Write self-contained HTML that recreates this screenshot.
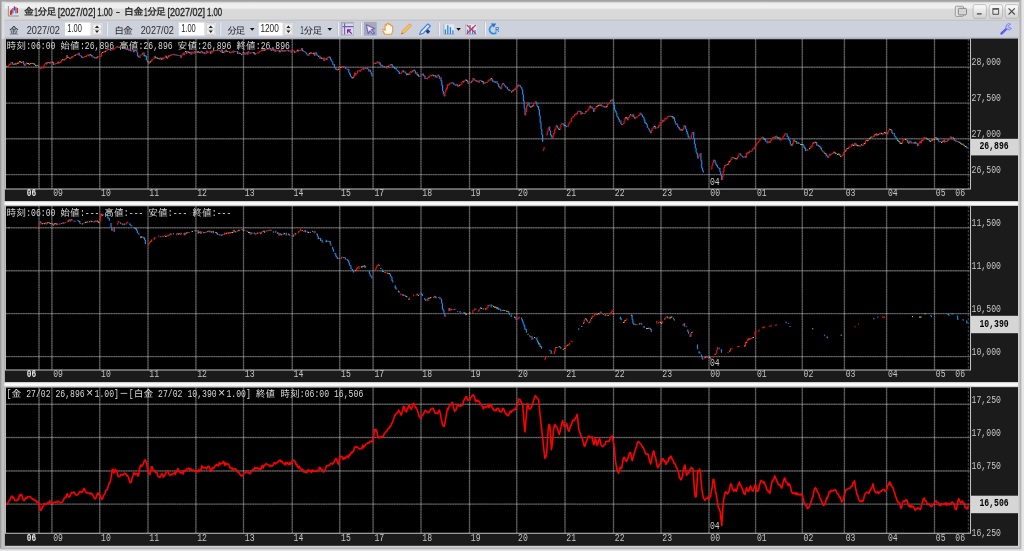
<!DOCTYPE html>
<html lang="ja"><head><meta charset="utf-8"><title>金1分足[2027/02]1.00 - 白金1分足[2027/02]1.00</title>
<style>
html,body{margin:0;padding:0;background:#a6a6a6;}
body{width:1024px;height:551px;overflow:hidden;position:relative;font-family:"Liberation Sans","IPAGothic",sans-serif;}
svg text{white-space:pre}
svg{will-change:transform}
</style></head><body>
<svg width="1024" height="551" viewBox="0 0 1024 551" style="position:absolute;left:0;top:0;display:block">
<defs>
<linearGradient id="gt" x1="0" y1="0" x2="0" y2="1"><stop offset="0" stop-color="#e6e6e6"/><stop offset="0.1" stop-color="#eeeeee"/><stop offset="0.3" stop-color="#f0f0f0"/><stop offset="0.4" stop-color="#dadada"/><stop offset="1" stop-color="#d8d8d8"/></linearGradient>
<linearGradient id="gs" x1="0" y1="0" x2="0" y2="1"><stop offset="0" stop-color="#d0d0d0"/><stop offset="0.35" stop-color="#ffffff"/><stop offset="0.7" stop-color="#f4f4f4"/><stop offset="1" stop-color="#b8b8b8"/></linearGradient>
<linearGradient id="gb" x1="0" y1="0" x2="0" y2="1"><stop offset="0" stop-color="#fdfdfd"/><stop offset="1" stop-color="#d0d0d0"/></linearGradient>
</defs>
<rect x="0" y="0" width="1024" height="551" fill="#e6e6ea"/>
<rect x="0" y="0" width="1021.4" height="549.3" fill="#b4b4b4"/>
<rect x="0" y="0" width="1019.6" height="547.7" fill="#a2a2a2"/>
<rect x="0" y="1.7" width="1.7" height="546" fill="#9a9a9a"/>
<rect x="1.7" y="1.7" width="1017.9" height="546.0" fill="#d0d0d0"/>
<rect x="1.7" y="39" width="4" height="508.70000000000005" fill="#c0c0c0"/>
<rect x="1.7" y="1.7" width="4" height="37.3" fill="#dcdcdc"/>
<rect x="4.5" y="2.6" width="1014.0" height="17.4" fill="url(#gt)"/>
<rect x="4.5" y="19.8" width="1014.0" height="0.9" fill="#b4b4b4"/>
<rect x="4.5" y="20.6" width="1014.0" height="18.2" fill="#cdd1dc"/>
<rect x="4.5" y="36.9" width="1014.0" height="1.9" fill="#bcc0ce"/>
<rect x="4.9" y="38.6" width="1013.1" height="162.6" fill="#1b1b1b"/>
<rect x="5.4" y="39.0" width="965.4" height="150.0" fill="#000"/>
<rect x="4.9" y="205.6" width="1013.1" height="176.6" fill="#1b1b1b"/>
<rect x="5.4" y="206.0" width="965.4" height="164.0" fill="#000"/>
<rect x="4.9" y="386.8" width="1013.1" height="158.99999999999997" fill="#1b1b1b"/>
<rect x="5.4" y="387.2" width="965.4" height="146.09999999999997" fill="#000"/>
<rect x="4.4" y="201.2" width="1013.6" height="4.800000000000011" fill="url(#gs)"/>
<rect x="4.4" y="382.2" width="1013.6" height="5.0" fill="url(#gs)"/>
<path d="M39 39.0V189.0M51.9 39.0V189.0M99.75 39.0V189.0M148 39.0V189.0M195.9 39.0V189.0M243.5 39.0V189.0M292.25 39.0V189.0M339.75 39.0V189.0M373.1 39.0V189.0M421 39.0V189.0M469.5 39.0V189.0M516.75 39.0V189.0M565 39.0V189.0M613.5 39.0V189.0M661 39.0V189.0M709 39.0V189.0M755.6 39.0V189.0M802.3 39.0V189.0M844.4 39.0V189.0M886.6 39.0V189.0M934.5 39.0V189.0M6.0 67.2H970.8M6.0 103.1H970.8M6.0 138.8H970.8M6.0 174.6H970.8" stroke="#3c3c3c" stroke-width="1.45" fill="none"/>
<path d="M39 39.0V189.0M51.9 39.0V189.0M99.75 39.0V189.0M148 39.0V189.0M195.9 39.0V189.0M243.5 39.0V189.0M292.25 39.0V189.0M339.75 39.0V189.0M373.1 39.0V189.0M421 39.0V189.0M469.5 39.0V189.0M516.75 39.0V189.0M565 39.0V189.0M613.5 39.0V189.0M661 39.0V189.0M709 39.0V189.0M755.6 39.0V189.0M802.3 39.0V189.0M844.4 39.0V189.0M886.6 39.0V189.0M934.5 39.0V189.0M6.0 67.2H970.8M6.0 103.1H970.8M6.0 138.8H970.8M6.0 174.6H970.8" stroke="#a0a0a0" stroke-width="1.0" stroke-dasharray="1.6 0.84" fill="none" opacity="0.45"/>
<path d="M38.3 67.2h1.4M38.3 103.1h1.4M38.3 138.8h1.4M38.3 174.6h1.4M51.199999999999996 67.2h1.4M51.199999999999996 103.1h1.4M51.199999999999996 138.8h1.4M51.199999999999996 174.6h1.4M99.05 67.2h1.4M99.05 103.1h1.4M99.05 138.8h1.4M99.05 174.6h1.4M147.3 67.2h1.4M147.3 103.1h1.4M147.3 138.8h1.4M147.3 174.6h1.4M195.20000000000002 67.2h1.4M195.20000000000002 103.1h1.4M195.20000000000002 138.8h1.4M195.20000000000002 174.6h1.4M242.8 67.2h1.4M242.8 103.1h1.4M242.8 138.8h1.4M242.8 174.6h1.4M291.55 67.2h1.4M291.55 103.1h1.4M291.55 138.8h1.4M291.55 174.6h1.4M339.05 67.2h1.4M339.05 103.1h1.4M339.05 138.8h1.4M339.05 174.6h1.4M372.40000000000003 67.2h1.4M372.40000000000003 103.1h1.4M372.40000000000003 138.8h1.4M372.40000000000003 174.6h1.4M420.3 67.2h1.4M420.3 103.1h1.4M420.3 138.8h1.4M420.3 174.6h1.4M468.8 67.2h1.4M468.8 103.1h1.4M468.8 138.8h1.4M468.8 174.6h1.4M516.05 67.2h1.4M516.05 103.1h1.4M516.05 138.8h1.4M516.05 174.6h1.4M564.3 67.2h1.4M564.3 103.1h1.4M564.3 138.8h1.4M564.3 174.6h1.4M612.8 67.2h1.4M612.8 103.1h1.4M612.8 138.8h1.4M612.8 174.6h1.4M660.3 67.2h1.4M660.3 103.1h1.4M660.3 138.8h1.4M660.3 174.6h1.4M708.3 67.2h1.4M708.3 103.1h1.4M708.3 138.8h1.4M708.3 174.6h1.4M754.9 67.2h1.4M754.9 103.1h1.4M754.9 138.8h1.4M754.9 174.6h1.4M801.5999999999999 67.2h1.4M801.5999999999999 103.1h1.4M801.5999999999999 138.8h1.4M801.5999999999999 174.6h1.4M843.6999999999999 67.2h1.4M843.6999999999999 103.1h1.4M843.6999999999999 138.8h1.4M843.6999999999999 174.6h1.4M885.9 67.2h1.4M885.9 103.1h1.4M885.9 138.8h1.4M885.9 174.6h1.4M933.8 67.2h1.4M933.8 103.1h1.4M933.8 138.8h1.4M933.8 174.6h1.4" stroke="#c4c4c4" stroke-width="1.3" fill="none" opacity="0.45"/>
<path d="M968.3 39.0V189.0" stroke="#6c6c6c" stroke-width="0.7" stroke-dasharray="2.4 1.6"/>
<path d="M5.45 38.7H970.5V188.9H5.45Z" stroke="#c2c2c2" stroke-width="1.05" fill="none"/>
<text x="26.80" y="196.40" font-size="10.4" font-family="Liberation Mono, IPAGothic, monospace" fill="#e6e6e6" textLength="9.40" lengthAdjust="spacingAndGlyphs" font-weight="bold">06</text>
<text x="53.20" y="196.40" font-size="10.4" font-family="Liberation Mono, IPAGothic, monospace" fill="#c4c4c4" textLength="9.77" lengthAdjust="spacingAndGlyphs">09</text>
<text x="101.05" y="196.40" font-size="10.4" font-family="Liberation Mono, IPAGothic, monospace" fill="#c4c4c4" textLength="9.77" lengthAdjust="spacingAndGlyphs">10</text>
<text x="149.30" y="196.40" font-size="10.4" font-family="Liberation Mono, IPAGothic, monospace" fill="#c4c4c4" textLength="9.77" lengthAdjust="spacingAndGlyphs">11</text>
<text x="197.20" y="196.40" font-size="10.4" font-family="Liberation Mono, IPAGothic, monospace" fill="#c4c4c4" textLength="9.77" lengthAdjust="spacingAndGlyphs">12</text>
<text x="244.80" y="196.40" font-size="10.4" font-family="Liberation Mono, IPAGothic, monospace" fill="#c4c4c4" textLength="9.77" lengthAdjust="spacingAndGlyphs">13</text>
<text x="293.55" y="196.40" font-size="10.4" font-family="Liberation Mono, IPAGothic, monospace" fill="#c4c4c4" textLength="9.77" lengthAdjust="spacingAndGlyphs">14</text>
<text x="341.05" y="196.40" font-size="10.4" font-family="Liberation Mono, IPAGothic, monospace" fill="#c4c4c4" textLength="9.77" lengthAdjust="spacingAndGlyphs">15</text>
<text x="374.40" y="196.40" font-size="10.4" font-family="Liberation Mono, IPAGothic, monospace" fill="#c4c4c4" textLength="9.77" lengthAdjust="spacingAndGlyphs">17</text>
<text x="422.30" y="196.40" font-size="10.4" font-family="Liberation Mono, IPAGothic, monospace" fill="#c4c4c4" textLength="9.77" lengthAdjust="spacingAndGlyphs">18</text>
<text x="470.80" y="196.40" font-size="10.4" font-family="Liberation Mono, IPAGothic, monospace" fill="#c4c4c4" textLength="9.77" lengthAdjust="spacingAndGlyphs">19</text>
<text x="518.05" y="196.40" font-size="10.4" font-family="Liberation Mono, IPAGothic, monospace" fill="#c4c4c4" textLength="9.77" lengthAdjust="spacingAndGlyphs">20</text>
<text x="566.30" y="196.40" font-size="10.4" font-family="Liberation Mono, IPAGothic, monospace" fill="#c4c4c4" textLength="9.77" lengthAdjust="spacingAndGlyphs">21</text>
<text x="614.80" y="196.40" font-size="10.4" font-family="Liberation Mono, IPAGothic, monospace" fill="#c4c4c4" textLength="9.77" lengthAdjust="spacingAndGlyphs">22</text>
<text x="662.30" y="196.40" font-size="10.4" font-family="Liberation Mono, IPAGothic, monospace" fill="#c4c4c4" textLength="9.77" lengthAdjust="spacingAndGlyphs">23</text>
<text x="710.30" y="196.40" font-size="10.4" font-family="Liberation Mono, IPAGothic, monospace" fill="#c4c4c4" textLength="9.77" lengthAdjust="spacingAndGlyphs">00</text>
<text x="756.90" y="196.40" font-size="10.4" font-family="Liberation Mono, IPAGothic, monospace" fill="#c4c4c4" textLength="9.77" lengthAdjust="spacingAndGlyphs">01</text>
<text x="803.60" y="196.40" font-size="10.4" font-family="Liberation Mono, IPAGothic, monospace" fill="#c4c4c4" textLength="9.77" lengthAdjust="spacingAndGlyphs">02</text>
<text x="845.70" y="196.40" font-size="10.4" font-family="Liberation Mono, IPAGothic, monospace" fill="#c4c4c4" textLength="9.77" lengthAdjust="spacingAndGlyphs">03</text>
<text x="887.90" y="196.40" font-size="10.4" font-family="Liberation Mono, IPAGothic, monospace" fill="#c4c4c4" textLength="9.77" lengthAdjust="spacingAndGlyphs">04</text>
<text x="935.80" y="196.40" font-size="10.4" font-family="Liberation Mono, IPAGothic, monospace" fill="#c4c4c4" textLength="9.77" lengthAdjust="spacingAndGlyphs">05</text>
<text x="955.30" y="196.40" font-size="10.4" font-family="Liberation Mono, IPAGothic, monospace" fill="#c4c4c4" textLength="9.77" lengthAdjust="spacingAndGlyphs">06</text>
<text x="709.90" y="184.90" font-size="10.4" font-family="Liberation Mono, IPAGothic, monospace" fill="#c8c8c8" textLength="9.77" lengthAdjust="spacingAndGlyphs">04</text>
<text x="971.60" y="65.40" font-size="10.4" font-family="Liberation Mono, IPAGothic, monospace" fill="#c6c6c6" textLength="29.32" lengthAdjust="spacingAndGlyphs">28,000</text>
<text x="971.60" y="101.30" font-size="10.4" font-family="Liberation Mono, IPAGothic, monospace" fill="#c6c6c6" textLength="29.32" lengthAdjust="spacingAndGlyphs">27,500</text>
<text x="971.60" y="137.00" font-size="10.4" font-family="Liberation Mono, IPAGothic, monospace" fill="#c6c6c6" textLength="29.32" lengthAdjust="spacingAndGlyphs">27,000</text>
<text x="971.60" y="172.80" font-size="10.4" font-family="Liberation Mono, IPAGothic, monospace" fill="#c6c6c6" textLength="29.32" lengthAdjust="spacingAndGlyphs">26,500</text>
<rect x="971.0" y="138.8" width="47.00000000000004" height="16.599999999999994" fill="#d6d6d6"/>
<text x="979.40" y="149.10" font-size="10.6" font-family="Liberation Mono, IPAGothic, monospace" fill="#000" textLength="29.32" lengthAdjust="spacingAndGlyphs" font-weight="bold">26,896</text>
<path d="M39 206.0V370.0M51.9 206.0V370.0M99.75 206.0V370.0M148 206.0V370.0M195.9 206.0V370.0M243.5 206.0V370.0M292.25 206.0V370.0M339.75 206.0V370.0M373.1 206.0V370.0M421 206.0V370.0M469.5 206.0V370.0M516.75 206.0V370.0M565 206.0V370.0M613.5 206.0V370.0M661 206.0V370.0M709 206.0V370.0M755.6 206.0V370.0M802.3 206.0V370.0M844.4 206.0V370.0M886.6 206.0V370.0M934.5 206.0V370.0M6.0 227.8H970.8M6.0 270.8H970.8M6.0 313.6H970.8M6.0 356.6H970.8" stroke="#3c3c3c" stroke-width="1.45" fill="none"/>
<path d="M39 206.0V370.0M51.9 206.0V370.0M99.75 206.0V370.0M148 206.0V370.0M195.9 206.0V370.0M243.5 206.0V370.0M292.25 206.0V370.0M339.75 206.0V370.0M373.1 206.0V370.0M421 206.0V370.0M469.5 206.0V370.0M516.75 206.0V370.0M565 206.0V370.0M613.5 206.0V370.0M661 206.0V370.0M709 206.0V370.0M755.6 206.0V370.0M802.3 206.0V370.0M844.4 206.0V370.0M886.6 206.0V370.0M934.5 206.0V370.0M6.0 227.8H970.8M6.0 270.8H970.8M6.0 313.6H970.8M6.0 356.6H970.8" stroke="#a0a0a0" stroke-width="1.0" stroke-dasharray="1.6 0.84" fill="none" opacity="0.45"/>
<path d="M38.3 227.8h1.4M38.3 270.8h1.4M38.3 313.6h1.4M38.3 356.6h1.4M51.199999999999996 227.8h1.4M51.199999999999996 270.8h1.4M51.199999999999996 313.6h1.4M51.199999999999996 356.6h1.4M99.05 227.8h1.4M99.05 270.8h1.4M99.05 313.6h1.4M99.05 356.6h1.4M147.3 227.8h1.4M147.3 270.8h1.4M147.3 313.6h1.4M147.3 356.6h1.4M195.20000000000002 227.8h1.4M195.20000000000002 270.8h1.4M195.20000000000002 313.6h1.4M195.20000000000002 356.6h1.4M242.8 227.8h1.4M242.8 270.8h1.4M242.8 313.6h1.4M242.8 356.6h1.4M291.55 227.8h1.4M291.55 270.8h1.4M291.55 313.6h1.4M291.55 356.6h1.4M339.05 227.8h1.4M339.05 270.8h1.4M339.05 313.6h1.4M339.05 356.6h1.4M372.40000000000003 227.8h1.4M372.40000000000003 270.8h1.4M372.40000000000003 313.6h1.4M372.40000000000003 356.6h1.4M420.3 227.8h1.4M420.3 270.8h1.4M420.3 313.6h1.4M420.3 356.6h1.4M468.8 227.8h1.4M468.8 270.8h1.4M468.8 313.6h1.4M468.8 356.6h1.4M516.05 227.8h1.4M516.05 270.8h1.4M516.05 313.6h1.4M516.05 356.6h1.4M564.3 227.8h1.4M564.3 270.8h1.4M564.3 313.6h1.4M564.3 356.6h1.4M612.8 227.8h1.4M612.8 270.8h1.4M612.8 313.6h1.4M612.8 356.6h1.4M660.3 227.8h1.4M660.3 270.8h1.4M660.3 313.6h1.4M660.3 356.6h1.4M708.3 227.8h1.4M708.3 270.8h1.4M708.3 313.6h1.4M708.3 356.6h1.4M754.9 227.8h1.4M754.9 270.8h1.4M754.9 313.6h1.4M754.9 356.6h1.4M801.5999999999999 227.8h1.4M801.5999999999999 270.8h1.4M801.5999999999999 313.6h1.4M801.5999999999999 356.6h1.4M843.6999999999999 227.8h1.4M843.6999999999999 270.8h1.4M843.6999999999999 313.6h1.4M843.6999999999999 356.6h1.4M885.9 227.8h1.4M885.9 270.8h1.4M885.9 313.6h1.4M885.9 356.6h1.4M933.8 227.8h1.4M933.8 270.8h1.4M933.8 313.6h1.4M933.8 356.6h1.4" stroke="#c4c4c4" stroke-width="1.3" fill="none" opacity="0.45"/>
<path d="M968.3 206.0V370.0" stroke="#6c6c6c" stroke-width="0.7" stroke-dasharray="2.4 1.6"/>
<path d="M5.45 205.7H970.5V369.9H5.45Z" stroke="#c2c2c2" stroke-width="1.05" fill="none"/>
<text x="26.80" y="377.40" font-size="10.4" font-family="Liberation Mono, IPAGothic, monospace" fill="#e6e6e6" textLength="9.40" lengthAdjust="spacingAndGlyphs" font-weight="bold">06</text>
<text x="53.20" y="377.40" font-size="10.4" font-family="Liberation Mono, IPAGothic, monospace" fill="#c4c4c4" textLength="9.77" lengthAdjust="spacingAndGlyphs">09</text>
<text x="101.05" y="377.40" font-size="10.4" font-family="Liberation Mono, IPAGothic, monospace" fill="#c4c4c4" textLength="9.77" lengthAdjust="spacingAndGlyphs">10</text>
<text x="149.30" y="377.40" font-size="10.4" font-family="Liberation Mono, IPAGothic, monospace" fill="#c4c4c4" textLength="9.77" lengthAdjust="spacingAndGlyphs">11</text>
<text x="197.20" y="377.40" font-size="10.4" font-family="Liberation Mono, IPAGothic, monospace" fill="#c4c4c4" textLength="9.77" lengthAdjust="spacingAndGlyphs">12</text>
<text x="244.80" y="377.40" font-size="10.4" font-family="Liberation Mono, IPAGothic, monospace" fill="#c4c4c4" textLength="9.77" lengthAdjust="spacingAndGlyphs">13</text>
<text x="293.55" y="377.40" font-size="10.4" font-family="Liberation Mono, IPAGothic, monospace" fill="#c4c4c4" textLength="9.77" lengthAdjust="spacingAndGlyphs">14</text>
<text x="341.05" y="377.40" font-size="10.4" font-family="Liberation Mono, IPAGothic, monospace" fill="#c4c4c4" textLength="9.77" lengthAdjust="spacingAndGlyphs">15</text>
<text x="374.40" y="377.40" font-size="10.4" font-family="Liberation Mono, IPAGothic, monospace" fill="#c4c4c4" textLength="9.77" lengthAdjust="spacingAndGlyphs">17</text>
<text x="422.30" y="377.40" font-size="10.4" font-family="Liberation Mono, IPAGothic, monospace" fill="#c4c4c4" textLength="9.77" lengthAdjust="spacingAndGlyphs">18</text>
<text x="470.80" y="377.40" font-size="10.4" font-family="Liberation Mono, IPAGothic, monospace" fill="#c4c4c4" textLength="9.77" lengthAdjust="spacingAndGlyphs">19</text>
<text x="518.05" y="377.40" font-size="10.4" font-family="Liberation Mono, IPAGothic, monospace" fill="#c4c4c4" textLength="9.77" lengthAdjust="spacingAndGlyphs">20</text>
<text x="566.30" y="377.40" font-size="10.4" font-family="Liberation Mono, IPAGothic, monospace" fill="#c4c4c4" textLength="9.77" lengthAdjust="spacingAndGlyphs">21</text>
<text x="614.80" y="377.40" font-size="10.4" font-family="Liberation Mono, IPAGothic, monospace" fill="#c4c4c4" textLength="9.77" lengthAdjust="spacingAndGlyphs">22</text>
<text x="662.30" y="377.40" font-size="10.4" font-family="Liberation Mono, IPAGothic, monospace" fill="#c4c4c4" textLength="9.77" lengthAdjust="spacingAndGlyphs">23</text>
<text x="710.30" y="377.40" font-size="10.4" font-family="Liberation Mono, IPAGothic, monospace" fill="#c4c4c4" textLength="9.77" lengthAdjust="spacingAndGlyphs">00</text>
<text x="756.90" y="377.40" font-size="10.4" font-family="Liberation Mono, IPAGothic, monospace" fill="#c4c4c4" textLength="9.77" lengthAdjust="spacingAndGlyphs">01</text>
<text x="803.60" y="377.40" font-size="10.4" font-family="Liberation Mono, IPAGothic, monospace" fill="#c4c4c4" textLength="9.77" lengthAdjust="spacingAndGlyphs">02</text>
<text x="845.70" y="377.40" font-size="10.4" font-family="Liberation Mono, IPAGothic, monospace" fill="#c4c4c4" textLength="9.77" lengthAdjust="spacingAndGlyphs">03</text>
<text x="887.90" y="377.40" font-size="10.4" font-family="Liberation Mono, IPAGothic, monospace" fill="#c4c4c4" textLength="9.77" lengthAdjust="spacingAndGlyphs">04</text>
<text x="935.80" y="377.40" font-size="10.4" font-family="Liberation Mono, IPAGothic, monospace" fill="#c4c4c4" textLength="9.77" lengthAdjust="spacingAndGlyphs">05</text>
<text x="955.30" y="377.40" font-size="10.4" font-family="Liberation Mono, IPAGothic, monospace" fill="#c4c4c4" textLength="9.77" lengthAdjust="spacingAndGlyphs">06</text>
<text x="709.90" y="366.30" font-size="10.4" font-family="Liberation Mono, IPAGothic, monospace" fill="#c8c8c8" textLength="9.77" lengthAdjust="spacingAndGlyphs">04</text>
<text x="971.60" y="226.00" font-size="10.4" font-family="Liberation Mono, IPAGothic, monospace" fill="#c6c6c6" textLength="29.32" lengthAdjust="spacingAndGlyphs">11,500</text>
<text x="971.60" y="269.00" font-size="10.4" font-family="Liberation Mono, IPAGothic, monospace" fill="#c6c6c6" textLength="29.32" lengthAdjust="spacingAndGlyphs">11,000</text>
<text x="971.60" y="311.80" font-size="10.4" font-family="Liberation Mono, IPAGothic, monospace" fill="#c6c6c6" textLength="29.32" lengthAdjust="spacingAndGlyphs">10,500</text>
<text x="971.60" y="354.80" font-size="10.4" font-family="Liberation Mono, IPAGothic, monospace" fill="#c6c6c6" textLength="29.32" lengthAdjust="spacingAndGlyphs">10,000</text>
<rect x="971.0" y="315.8" width="47.00000000000004" height="17.399999999999977" fill="#d6d6d6"/>
<text x="979.40" y="326.50" font-size="10.6" font-family="Liberation Mono, IPAGothic, monospace" fill="#000" textLength="29.32" lengthAdjust="spacingAndGlyphs" font-weight="bold">10,390</text>
<path d="M39 387.2V533.3M51.9 387.2V533.3M99.75 387.2V533.3M148 387.2V533.3M195.9 387.2V533.3M243.5 387.2V533.3M292.25 387.2V533.3M339.75 387.2V533.3M373.1 387.2V533.3M421 387.2V533.3M469.5 387.2V533.3M516.75 387.2V533.3M565 387.2V533.3M613.5 387.2V533.3M661 387.2V533.3M709 387.2V533.3M755.6 387.2V533.3M802.3 387.2V533.3M844.4 387.2V533.3M886.6 387.2V533.3M934.5 387.2V533.3M6.0 404.3H970.8M6.0 437.5H970.8M6.0 470.9H970.8M6.0 504.1H970.8" stroke="#3c3c3c" stroke-width="1.45" fill="none"/>
<path d="M39 387.2V533.3M51.9 387.2V533.3M99.75 387.2V533.3M148 387.2V533.3M195.9 387.2V533.3M243.5 387.2V533.3M292.25 387.2V533.3M339.75 387.2V533.3M373.1 387.2V533.3M421 387.2V533.3M469.5 387.2V533.3M516.75 387.2V533.3M565 387.2V533.3M613.5 387.2V533.3M661 387.2V533.3M709 387.2V533.3M755.6 387.2V533.3M802.3 387.2V533.3M844.4 387.2V533.3M886.6 387.2V533.3M934.5 387.2V533.3M6.0 404.3H970.8M6.0 437.5H970.8M6.0 470.9H970.8M6.0 504.1H970.8" stroke="#a0a0a0" stroke-width="1.0" stroke-dasharray="1.6 0.84" fill="none" opacity="0.45"/>
<path d="M38.3 404.3h1.4M38.3 437.5h1.4M38.3 470.9h1.4M38.3 504.1h1.4M51.199999999999996 404.3h1.4M51.199999999999996 437.5h1.4M51.199999999999996 470.9h1.4M51.199999999999996 504.1h1.4M99.05 404.3h1.4M99.05 437.5h1.4M99.05 470.9h1.4M99.05 504.1h1.4M147.3 404.3h1.4M147.3 437.5h1.4M147.3 470.9h1.4M147.3 504.1h1.4M195.20000000000002 404.3h1.4M195.20000000000002 437.5h1.4M195.20000000000002 470.9h1.4M195.20000000000002 504.1h1.4M242.8 404.3h1.4M242.8 437.5h1.4M242.8 470.9h1.4M242.8 504.1h1.4M291.55 404.3h1.4M291.55 437.5h1.4M291.55 470.9h1.4M291.55 504.1h1.4M339.05 404.3h1.4M339.05 437.5h1.4M339.05 470.9h1.4M339.05 504.1h1.4M372.40000000000003 404.3h1.4M372.40000000000003 437.5h1.4M372.40000000000003 470.9h1.4M372.40000000000003 504.1h1.4M420.3 404.3h1.4M420.3 437.5h1.4M420.3 470.9h1.4M420.3 504.1h1.4M468.8 404.3h1.4M468.8 437.5h1.4M468.8 470.9h1.4M468.8 504.1h1.4M516.05 404.3h1.4M516.05 437.5h1.4M516.05 470.9h1.4M516.05 504.1h1.4M564.3 404.3h1.4M564.3 437.5h1.4M564.3 470.9h1.4M564.3 504.1h1.4M612.8 404.3h1.4M612.8 437.5h1.4M612.8 470.9h1.4M612.8 504.1h1.4M660.3 404.3h1.4M660.3 437.5h1.4M660.3 470.9h1.4M660.3 504.1h1.4M708.3 404.3h1.4M708.3 437.5h1.4M708.3 470.9h1.4M708.3 504.1h1.4M754.9 404.3h1.4M754.9 437.5h1.4M754.9 470.9h1.4M754.9 504.1h1.4M801.5999999999999 404.3h1.4M801.5999999999999 437.5h1.4M801.5999999999999 470.9h1.4M801.5999999999999 504.1h1.4M843.6999999999999 404.3h1.4M843.6999999999999 437.5h1.4M843.6999999999999 470.9h1.4M843.6999999999999 504.1h1.4M885.9 404.3h1.4M885.9 437.5h1.4M885.9 470.9h1.4M885.9 504.1h1.4M933.8 404.3h1.4M933.8 437.5h1.4M933.8 470.9h1.4M933.8 504.1h1.4" stroke="#c4c4c4" stroke-width="1.3" fill="none" opacity="0.45"/>
<path d="M968.3 387.2V533.3" stroke="#6c6c6c" stroke-width="0.7" stroke-dasharray="2.4 1.6"/>
<path d="M5.45 386.9H970.5V533.1999999999999H5.45Z" stroke="#c2c2c2" stroke-width="1.05" fill="none"/>
<text x="26.80" y="540.70" font-size="10.4" font-family="Liberation Mono, IPAGothic, monospace" fill="#e6e6e6" textLength="9.40" lengthAdjust="spacingAndGlyphs" font-weight="bold">06</text>
<text x="53.20" y="540.70" font-size="10.4" font-family="Liberation Mono, IPAGothic, monospace" fill="#c4c4c4" textLength="9.77" lengthAdjust="spacingAndGlyphs">09</text>
<text x="101.05" y="540.70" font-size="10.4" font-family="Liberation Mono, IPAGothic, monospace" fill="#c4c4c4" textLength="9.77" lengthAdjust="spacingAndGlyphs">10</text>
<text x="149.30" y="540.70" font-size="10.4" font-family="Liberation Mono, IPAGothic, monospace" fill="#c4c4c4" textLength="9.77" lengthAdjust="spacingAndGlyphs">11</text>
<text x="197.20" y="540.70" font-size="10.4" font-family="Liberation Mono, IPAGothic, monospace" fill="#c4c4c4" textLength="9.77" lengthAdjust="spacingAndGlyphs">12</text>
<text x="244.80" y="540.70" font-size="10.4" font-family="Liberation Mono, IPAGothic, monospace" fill="#c4c4c4" textLength="9.77" lengthAdjust="spacingAndGlyphs">13</text>
<text x="293.55" y="540.70" font-size="10.4" font-family="Liberation Mono, IPAGothic, monospace" fill="#c4c4c4" textLength="9.77" lengthAdjust="spacingAndGlyphs">14</text>
<text x="341.05" y="540.70" font-size="10.4" font-family="Liberation Mono, IPAGothic, monospace" fill="#c4c4c4" textLength="9.77" lengthAdjust="spacingAndGlyphs">15</text>
<text x="374.40" y="540.70" font-size="10.4" font-family="Liberation Mono, IPAGothic, monospace" fill="#c4c4c4" textLength="9.77" lengthAdjust="spacingAndGlyphs">17</text>
<text x="422.30" y="540.70" font-size="10.4" font-family="Liberation Mono, IPAGothic, monospace" fill="#c4c4c4" textLength="9.77" lengthAdjust="spacingAndGlyphs">18</text>
<text x="470.80" y="540.70" font-size="10.4" font-family="Liberation Mono, IPAGothic, monospace" fill="#c4c4c4" textLength="9.77" lengthAdjust="spacingAndGlyphs">19</text>
<text x="518.05" y="540.70" font-size="10.4" font-family="Liberation Mono, IPAGothic, monospace" fill="#c4c4c4" textLength="9.77" lengthAdjust="spacingAndGlyphs">20</text>
<text x="566.30" y="540.70" font-size="10.4" font-family="Liberation Mono, IPAGothic, monospace" fill="#c4c4c4" textLength="9.77" lengthAdjust="spacingAndGlyphs">21</text>
<text x="614.80" y="540.70" font-size="10.4" font-family="Liberation Mono, IPAGothic, monospace" fill="#c4c4c4" textLength="9.77" lengthAdjust="spacingAndGlyphs">22</text>
<text x="662.30" y="540.70" font-size="10.4" font-family="Liberation Mono, IPAGothic, monospace" fill="#c4c4c4" textLength="9.77" lengthAdjust="spacingAndGlyphs">23</text>
<text x="710.30" y="540.70" font-size="10.4" font-family="Liberation Mono, IPAGothic, monospace" fill="#c4c4c4" textLength="9.77" lengthAdjust="spacingAndGlyphs">00</text>
<text x="756.90" y="540.70" font-size="10.4" font-family="Liberation Mono, IPAGothic, monospace" fill="#c4c4c4" textLength="9.77" lengthAdjust="spacingAndGlyphs">01</text>
<text x="803.60" y="540.70" font-size="10.4" font-family="Liberation Mono, IPAGothic, monospace" fill="#c4c4c4" textLength="9.77" lengthAdjust="spacingAndGlyphs">02</text>
<text x="845.70" y="540.70" font-size="10.4" font-family="Liberation Mono, IPAGothic, monospace" fill="#c4c4c4" textLength="9.77" lengthAdjust="spacingAndGlyphs">03</text>
<text x="887.90" y="540.70" font-size="10.4" font-family="Liberation Mono, IPAGothic, monospace" fill="#c4c4c4" textLength="9.77" lengthAdjust="spacingAndGlyphs">04</text>
<text x="935.80" y="540.70" font-size="10.4" font-family="Liberation Mono, IPAGothic, monospace" fill="#c4c4c4" textLength="9.77" lengthAdjust="spacingAndGlyphs">05</text>
<text x="955.30" y="540.70" font-size="10.4" font-family="Liberation Mono, IPAGothic, monospace" fill="#c4c4c4" textLength="9.77" lengthAdjust="spacingAndGlyphs">06</text>
<text x="709.90" y="529.40" font-size="10.4" font-family="Liberation Mono, IPAGothic, monospace" fill="#c8c8c8" textLength="9.77" lengthAdjust="spacingAndGlyphs">04</text>
<text x="971.60" y="402.50" font-size="10.4" font-family="Liberation Mono, IPAGothic, monospace" fill="#c6c6c6" textLength="29.32" lengthAdjust="spacingAndGlyphs">17,250</text>
<text x="971.60" y="435.70" font-size="10.4" font-family="Liberation Mono, IPAGothic, monospace" fill="#c6c6c6" textLength="29.32" lengthAdjust="spacingAndGlyphs">17,000</text>
<text x="971.60" y="469.10" font-size="10.4" font-family="Liberation Mono, IPAGothic, monospace" fill="#c6c6c6" textLength="29.32" lengthAdjust="spacingAndGlyphs">16,750</text>
<text x="971.60" y="535.60" font-size="10.4" font-family="Liberation Mono, IPAGothic, monospace" fill="#c6c6c6" textLength="29.32" lengthAdjust="spacingAndGlyphs">16,250</text>
<rect x="971.0" y="495.7" width="47.00000000000004" height="17.500000000000057" fill="#d6d6d6"/>
<text x="979.40" y="506.45" font-size="10.6" font-family="Liberation Mono, IPAGothic, monospace" fill="#000" textLength="29.32" lengthAdjust="spacingAndGlyphs" font-weight="bold">16,506</text>
<text x="6.60" y="48.90" font-size="9.77" font-family="Liberation Mono, IPAGothic, monospace" fill="#d8d8d8" textLength="19.54" lengthAdjust="spacing">時刻</text>
<text x="26.14" y="49.20" font-size="10.4" font-family="Liberation Mono, IPAGothic, monospace" fill="#d8d8d8" textLength="29.32" lengthAdjust="spacingAndGlyphs">:06:00</text>
<text x="60.35" y="48.90" font-size="9.77" font-family="Liberation Mono, IPAGothic, monospace" fill="#d8d8d8" textLength="19.54" lengthAdjust="spacing">始値</text>
<text x="79.89" y="49.20" font-size="10.4" font-family="Liberation Mono, IPAGothic, monospace" fill="#d8d8d8" textLength="34.20" lengthAdjust="spacingAndGlyphs">:26,896</text>
<text x="118.98" y="48.90" font-size="9.77" font-family="Liberation Mono, IPAGothic, monospace" fill="#d8d8d8" textLength="19.54" lengthAdjust="spacing">高値</text>
<text x="138.52" y="49.20" font-size="10.4" font-family="Liberation Mono, IPAGothic, monospace" fill="#d8d8d8" textLength="34.20" lengthAdjust="spacingAndGlyphs">:26,896</text>
<text x="177.61" y="48.90" font-size="9.77" font-family="Liberation Mono, IPAGothic, monospace" fill="#d8d8d8" textLength="19.54" lengthAdjust="spacing">安値</text>
<text x="197.15" y="49.20" font-size="10.4" font-family="Liberation Mono, IPAGothic, monospace" fill="#d8d8d8" textLength="34.20" lengthAdjust="spacingAndGlyphs">:26,896</text>
<text x="236.24" y="48.90" font-size="9.77" font-family="Liberation Mono, IPAGothic, monospace" fill="#d8d8d8" textLength="19.54" lengthAdjust="spacing">終値</text>
<text x="255.79" y="49.20" font-size="10.4" font-family="Liberation Mono, IPAGothic, monospace" fill="#d8d8d8" textLength="34.20" lengthAdjust="spacingAndGlyphs">:26,896</text>
<text x="6.60" y="215.70" font-size="9.77" font-family="Liberation Mono, IPAGothic, monospace" fill="#d8d8d8" textLength="19.54" lengthAdjust="spacing">時刻</text>
<text x="26.14" y="216.00" font-size="10.4" font-family="Liberation Mono, IPAGothic, monospace" fill="#d8d8d8" textLength="29.32" lengthAdjust="spacingAndGlyphs">:06:00</text>
<text x="60.35" y="215.70" font-size="9.77" font-family="Liberation Mono, IPAGothic, monospace" fill="#d8d8d8" textLength="19.54" lengthAdjust="spacing">始値</text>
<text x="79.89" y="216.00" font-size="10.4" font-family="Liberation Mono, IPAGothic, monospace" fill="#d8d8d8" textLength="19.54" lengthAdjust="spacingAndGlyphs">:---</text>
<text x="104.32" y="215.70" font-size="9.77" font-family="Liberation Mono, IPAGothic, monospace" fill="#d8d8d8" textLength="19.54" lengthAdjust="spacing">高値</text>
<text x="123.86" y="216.00" font-size="10.4" font-family="Liberation Mono, IPAGothic, monospace" fill="#d8d8d8" textLength="19.54" lengthAdjust="spacingAndGlyphs">:---</text>
<text x="148.29" y="215.70" font-size="9.77" font-family="Liberation Mono, IPAGothic, monospace" fill="#d8d8d8" textLength="19.54" lengthAdjust="spacing">安値</text>
<text x="167.84" y="216.00" font-size="10.4" font-family="Liberation Mono, IPAGothic, monospace" fill="#d8d8d8" textLength="19.54" lengthAdjust="spacingAndGlyphs">:---</text>
<text x="192.27" y="215.70" font-size="9.77" font-family="Liberation Mono, IPAGothic, monospace" fill="#d8d8d8" textLength="19.54" lengthAdjust="spacing">終値</text>
<text x="211.81" y="216.00" font-size="10.4" font-family="Liberation Mono, IPAGothic, monospace" fill="#d8d8d8" textLength="19.54" lengthAdjust="spacingAndGlyphs">:---</text>
<text x="6.60" y="397.20" font-size="10.4" font-family="Liberation Mono, IPAGothic, monospace" fill="#d8d8d8" textLength="4.89" lengthAdjust="spacingAndGlyphs">[</text>
<text x="11.49" y="396.90" font-size="9.77" font-family="Liberation Mono, IPAGothic, monospace" fill="#d8d8d8" textLength="9.77" lengthAdjust="spacing">金</text>
<text x="26.14" y="397.20" font-size="10.4" font-family="Liberation Mono, IPAGothic, monospace" fill="#d8d8d8" textLength="58.63" lengthAdjust="spacingAndGlyphs">27/02 26,896</text>
<text x="89.66" y="397.20" font-size="12.21" font-family="Liberation Mono, IPAGothic, monospace" fill="#d8d8d8" text-anchor="middle">×</text>
<text x="94.55" y="397.20" font-size="10.4" font-family="Liberation Mono, IPAGothic, monospace" fill="#d8d8d8" textLength="24.43" lengthAdjust="spacingAndGlyphs">1.00]</text>
<text x="118.98" y="396.90" font-size="9.77" font-family="Liberation Mono, IPAGothic, monospace" fill="#d8d8d8" textLength="9.77" lengthAdjust="spacing">－</text>
<text x="128.75" y="397.20" font-size="10.4" font-family="Liberation Mono, IPAGothic, monospace" fill="#d8d8d8" textLength="4.89" lengthAdjust="spacingAndGlyphs">[</text>
<text x="133.64" y="396.90" font-size="9.77" font-family="Liberation Mono, IPAGothic, monospace" fill="#d8d8d8" textLength="19.54" lengthAdjust="spacing">白金</text>
<text x="158.07" y="397.20" font-size="10.4" font-family="Liberation Mono, IPAGothic, monospace" fill="#d8d8d8" textLength="58.63" lengthAdjust="spacingAndGlyphs">27/02 10,390</text>
<text x="221.58" y="397.20" font-size="12.21" font-family="Liberation Mono, IPAGothic, monospace" fill="#d8d8d8" text-anchor="middle">×</text>
<text x="226.47" y="397.20" font-size="10.4" font-family="Liberation Mono, IPAGothic, monospace" fill="#d8d8d8" textLength="24.43" lengthAdjust="spacingAndGlyphs">1.00]</text>
<text x="255.79" y="396.90" font-size="9.77" font-family="Liberation Mono, IPAGothic, monospace" fill="#d8d8d8" textLength="19.54" lengthAdjust="spacing">終値</text>
<text x="280.22" y="396.90" font-size="9.77" font-family="Liberation Mono, IPAGothic, monospace" fill="#d8d8d8" textLength="19.54" lengthAdjust="spacing">時刻</text>
<text x="299.76" y="397.20" font-size="10.4" font-family="Liberation Mono, IPAGothic, monospace" fill="#d8d8d8" textLength="63.52" lengthAdjust="spacingAndGlyphs">:06:00 16,506</text>
<path d="M7.60 66.33V66.59M10.00 64.02V64.88M12.40 62.02V64.38M13.20 63.72V64.53M15.60 63.12V64.86M22.00 61.91V63.34M23.60 60.97V64.36M24.40 63.83V65.78M26.80 62.56V63.73M32.40 62.74V64.03M33.20 63.35V64.14M36.40 64.99V66.25M43.20 67.11V68.25M46.40 62.53V64.49M49.60 62.08V63.55M51.20 61.60V62.98M53.60 62.22V64.99M56.80 62.95V63.79M58.40 61.47V63.49M60.00 61.89V63.03M67.20 55.11V57.62M68.80 57.27V58.03M69.60 57.79V59.09M77.60 53.84V54.80M79.20 52.75V55.73M80.80 54.97V56.37M81.60 56.11V57.57M82.40 56.77V57.91M85.60 56.20V57.09M88.80 54.44V56.14M90.40 54.08V55.24M92.00 54.97V57.28M93.60 56.48V57.62M94.40 57.01V58.32M100.80 55.64V56.46M103.20 52.16V52.98M108.00 47.74V49.80M108.80 49.01V50.07M110.40 48.97V50.71M113.60 48.32V49.39M117.60 46.13V47.43M120.80 46.51V48.06M123.20 47.07V48.41M125.60 47.03V49.06M127.20 47.75V49.79M128.80 48.56V50.64M130.40 49.49V51.05M131.20 50.71V51.57M133.60 49.46V52.17M136.80 50.08V52.62M137.60 52.52V56.20M138.40 55.66V56.95M139.20 56.41V57.91M144.00 52.29V56.28M145.60 55.51V56.56M146.40 55.72V60.07M147.20 59.78V61.20M148.80 61.41V63.76M155.20 55.71V58.13M156.80 57.53V58.27M158.40 57.95V58.95M160.80 57.55V59.48M163.20 57.38V59.39M166.40 55.66V57.91M171.20 54.52V55.58M172.80 54.12V54.80M174.40 54.16V55.28M176.00 54.14V55.47M177.60 54.77V55.73M178.40 55.19V55.79M179.20 55.53V56.07M180.80 54.95V57.74M184.00 52.45V54.93M186.40 51.00V53.77M188.00 51.20V52.60M189.60 51.86V53.55M191.20 51.92V54.82M192.80 51.64V52.85M193.60 52.44V53.56M196.00 50.70V53.30M199.20 51.66V53.02M201.60 50.85V51.98M202.40 51.55V52.89M203.20 52.52V53.76M204.80 52.04V54.20M207.20 50.76V53.03M210.40 51.24V54.02M212.00 50.72V52.49M215.20 50.14V50.93M218.40 49.66V50.59M219.20 50.03V50.86M220.00 50.23V51.24M220.80 50.89V52.22M222.40 49.41V52.89M224.80 50.71V52.54M226.40 49.83V51.70M228.00 51.43V52.00M229.60 51.41V53.15M231.20 51.91V52.66M232.80 51.23V52.47M234.40 50.95V51.72M235.20 51.20V52.08M237.60 51.08V53.96M239.20 52.38V53.79M240.80 53.36V54.15M241.60 54.00V55.31M244.80 52.47V54.47M247.20 52.06V54.73M248.80 51.36V53.37M250.40 52.46V53.39M252.80 52.19V52.87M254.40 52.34V54.23M258.40 52.65V53.21M260.00 50.98V51.63M262.40 49.57V51.13M267.20 48.68V49.47M268.00 49.00V49.57M269.60 48.47V49.05M271.20 48.42V50.77M273.60 47.62V50.86M275.20 49.21V52.00M276.80 50.25V50.83M279.20 49.88V52.16M281.60 49.17V50.65M282.40 50.05V51.38M284.00 49.91V51.63M285.60 50.19V51.30M288.00 49.83V50.72M288.80 50.12V51.55M291.20 50.93V52.85M292.80 49.41V51.11M294.40 50.64V53.04M298.40 49.83V51.48M300.00 50.24V50.90M302.40 48.31V50.99M303.20 50.19V51.82M304.80 50.92V52.19M305.60 52.02V52.76M306.40 52.70V54.36M307.20 54.13V54.94M308.00 54.61V55.82M311.20 51.96V53.42M312.00 53.12V53.76M314.40 52.86V55.63M316.00 52.00V53.70M316.80 53.30V55.41M317.60 54.81V55.70M320.00 55.82V58.66M322.40 58.10V59.04M324.00 57.41V60.89M326.40 58.24V59.85M328.00 57.21V58.09M329.60 56.20V57.72M330.40 57.34V59.47M331.20 58.89V61.12M332.00 60.70V62.12M332.80 61.79V64.81M334.40 64.08V67.45M335.20 67.11V68.56M336.00 68.36V69.95M336.80 69.08V70.11M343.20 66.18V67.82M344.80 66.38V67.61M345.60 66.99V68.78M346.40 68.73V69.09M347.20 68.76V70.31M348.80 68.77V72.80M349.60 72.40V74.53M350.40 73.64V76.47M351.20 76.01V77.24M352.00 77.11V78.48M355.20 72.83V75.16M360.00 70.16V71.71M363.20 67.67V69.64M365.60 67.43V68.78M367.20 67.87V69.15M368.00 68.40V68.99M368.80 68.94V71.43M370.40 69.74V72.07M371.20 71.68V74.29M372.00 73.72V76.43M375.40 62.70V63.88M377.80 61.59V63.24M379.40 62.34V63.47M380.20 62.60V65.08M381.00 64.62V66.40M382.60 65.01V66.70M384.20 66.11V67.50M385.00 67.10V67.87M386.60 66.34V68.27M391.40 63.93V64.88M392.20 64.31V66.46M393.00 65.75V67.17M393.80 66.83V68.07M395.40 67.90V68.74M396.20 67.82V69.79M397.00 69.61V70.54M397.80 70.23V71.50M398.60 70.76V72.25M399.40 71.77V73.91M400.20 73.41V73.87M403.40 70.32V72.23M405.00 71.34V72.70M405.80 72.40V73.87M406.60 73.60V75.62M409.00 73.91V74.94M411.40 71.51V72.68M414.60 69.49V71.00M415.40 70.68V73.67M417.00 72.36V75.35M418.60 74.52V76.75M419.40 75.98V76.66M421.80 74.29V75.29M423.40 73.61V75.73M424.20 75.31V76.36M425.00 75.83V79.01M426.60 78.15V78.99M428.20 77.23V78.10M431.40 74.99V76.23M433.00 74.41V75.98M435.40 74.93V76.72M436.20 76.11V77.90M438.60 74.45V76.21M439.40 76.01V78.81M441.00 77.13V81.13M441.80 80.59V85.85M442.60 85.08V91.19M443.40 90.90V93.93M444.20 93.77V96.35M448.20 84.36V85.42M450.60 82.83V83.35M452.20 82.31V83.29M453.00 82.58V83.50M453.80 82.85V84.79M454.60 84.41V85.04M455.40 84.39V85.66M457.00 83.82V85.43M457.80 85.09V86.71M463.40 80.76V82.50M465.80 79.33V80.56M467.40 80.18V82.01M468.20 81.15V84.05M469.80 82.18V83.35M470.60 82.80V83.26M473.80 78.01V79.57M474.60 79.23V80.54M475.40 79.93V80.60M476.20 80.03V81.85M477.80 80.50V81.96M478.60 81.50V82.50M481.00 80.04V81.07M481.80 80.77V82.01M483.40 81.30V84.30M485.80 82.13V83.06M487.40 81.79V82.42M489.80 79.50V80.59M492.20 78.52V81.00M493.00 80.51V81.94M493.80 81.07V82.17M494.60 81.61V82.38M495.40 81.54V82.92M497.00 81.20V83.24M497.80 82.91V84.21M498.60 83.80V86.87M499.40 86.29V87.38M500.20 86.75V88.43M501.00 88.21V89.15M503.40 82.91V84.04M504.20 83.79V85.51M505.00 85.31V86.45M505.80 85.94V87.58M507.40 86.92V89.33M508.20 88.97V89.82M509.00 89.10V90.71M509.80 89.88V90.99M510.60 90.67V90.91M515.40 88.57V89.63M517.00 86.43V87.71M518.60 84.45V86.19M520.20 85.02V86.99M521.00 86.67V87.79M521.80 87.32V89.71M522.60 89.52V94.58M523.40 94.18V101.28M524.20 100.83V108.24M525.00 108.00V115.37M528.20 102.44V103.09M529.00 102.80V105.85M529.80 105.39V106.91M530.60 106.27V107.65M536.20 101.50V103.12M537.00 102.63V105.90M538.60 106.23V109.78M539.40 109.39V115.65M540.20 115.39V122.86M541.00 122.35V129.35M541.80 128.98V135.02M542.60 134.51V141.86M549.70 126.62V130.69M550.50 130.50V135.26M551.30 134.60V136.82M552.10 136.32V138.73M556.90 125.00V126.76M557.70 126.29V128.21M558.50 127.91V129.54M562.50 123.28V124.15M563.30 123.60V124.62M564.10 123.70V126.36M565.70 125.13V126.50M566.50 125.97V127.07M567.30 126.65V127.09M572.90 116.60V117.00M575.30 114.34V114.95M576.90 112.71V114.10M579.30 110.64V111.62M580.10 111.11V111.90M580.90 111.37V114.55M582.50 112.40V113.70M584.10 112.96V113.76M590.50 105.44V107.98M592.10 106.44V108.68M592.90 108.64V108.94M593.70 108.32V111.97M601.70 104.59V106.33M603.30 105.64V106.53M604.10 106.09V107.20M604.90 106.73V107.83M608.90 103.43V104.25M612.90 98.94V101.44M613.70 101.01V105.43M614.50 104.80V110.07M615.30 109.43V111.77M616.10 110.90V113.31M616.90 113.07V116.56M617.70 116.14V117.75M618.50 117.37V119.58M619.30 119.05V122.09M620.90 120.55V124.11M621.70 123.83V125.02M627.30 117.40V120.18M632.10 114.26V116.66M633.70 114.58V117.37M634.50 116.83V118.87M636.10 117.30V118.09M640.90 112.63V114.64M641.70 113.94V115.33M642.50 114.68V117.00M643.30 116.43V118.04M644.10 117.60V120.44M644.90 119.74V123.34M646.50 122.97V124.41M647.30 124.30V127.68M648.10 127.60V128.35M648.90 128.10V129.99M649.70 129.67V131.39M650.50 131.20V133.26M655.30 125.92V128.71M656.90 127.43V128.26M659.30 125.20V126.13M660.90 122.04V122.60M663.30 119.64V121.57M665.70 118.23V119.20M668.90 115.85V116.86M670.50 115.64V116.46M671.30 115.67V116.55M672.90 116.35V118.50M674.50 117.50V121.34M675.30 120.96V123.56M676.10 123.09V125.06M677.70 123.69V126.90M678.50 126.69V127.91M679.30 127.20V129.25M680.10 128.48V130.62M682.50 129.57V130.66M684.90 125.36V126.92M685.70 126.25V129.16M686.50 129.12V131.91M687.30 131.24V134.27M688.10 133.59V137.12M688.90 136.16V138.54M689.70 138.36V138.80M692.90 131.99V132.75M693.70 132.10V138.42M694.50 137.97V144.28M695.30 143.78V148.15M696.10 147.76V152.58M696.90 152.27V154.26M697.70 153.55V158.38M700.90 153.01V160.76M701.70 160.35V168.35M702.50 167.82V170.78M703.30 170.38V172.53M714.30 159.79V160.69M715.10 160.29V163.17M715.90 162.67V164.83M716.70 164.27V166.06M717.50 165.27V167.56M718.30 167.30V168.13M719.10 167.72V168.71M719.90 168.08V171.79M720.70 171.43V175.37M721.50 174.94V180.07M725.50 164.85V165.81M733.50 156.92V157.92M734.30 157.76V158.67M736.70 158.26V159.42M739.90 153.37V154.40M740.70 153.86V155.50M741.50 155.40V155.99M742.30 155.80V156.92M743.10 156.47V157.79M745.50 155.89V157.72M747.10 152.98V154.24M748.70 151.94V153.21M750.30 150.66V151.34M751.10 150.80V151.76M753.50 148.62V149.11M759.10 140.77V141.35M763.10 136.70V138.53M763.90 138.44V140.02M765.50 138.92V141.49M767.10 140.61V142.87M767.90 142.72V143.42M769.50 141.36V142.59M773.50 137.11V137.87M776.70 135.83V137.58M777.50 137.08V138.32M779.90 137.25V140.19M786.30 133.41V134.07M787.10 133.55V136.99M787.90 136.15V137.33M788.70 136.69V139.82M789.50 139.45V141.19M790.30 140.47V144.28M791.10 143.88V145.42M794.30 139.62V141.33M795.10 140.68V141.65M796.70 141.20V143.81M799.10 142.60V143.54M799.90 143.28V143.71M803.10 143.94V145.30M803.90 144.89V147.43M804.70 146.75V148.42M805.50 147.71V151.27M811.10 146.35V147.35M813.50 142.34V143.80M815.10 141.62V142.87M816.70 142.20V145.66M818.30 144.77V146.19M819.90 145.72V147.28M820.70 146.84V148.67M821.50 147.76V150.13M826.30 153.40V156.13M827.10 155.34V156.45M827.90 155.65V157.68M830.30 153.78V155.45M835.10 151.95V153.76M839.90 153.91V156.10M847.10 148.35V149.23M849.50 146.69V147.42M852.70 143.77V145.81M855.10 142.81V145.41M856.70 143.63V145.92M862.30 144.69V145.85M871.90 136.71V137.43M876.70 133.25V135.86M879.90 132.81V134.30M882.30 133.24V134.85M885.50 131.97V134.05M887.10 132.22V134.35M891.10 129.30V130.62M891.90 130.04V132.97M893.50 133.15V133.52M894.30 133.08V136.29M895.10 135.80V136.89M895.90 136.51V138.04M896.70 137.86V139.60M898.30 140.09V141.46M899.90 141.49V143.78M906.30 139.33V140.09M907.90 140.62V142.98M910.30 140.83V141.39M911.10 141.33V143.44M912.70 142.60V143.15M914.30 142.30V143.69M915.90 141.93V144.07M917.50 143.17V146.29M920.70 141.52V143.14M922.30 139.95V141.14M924.70 137.25V138.92M927.10 137.99V139.56M928.70 139.22V140.22M929.50 139.64V141.53M936.70 137.49V139.95M938.30 138.62V141.22M939.10 140.65V142.24M940.70 140.99V142.07M944.70 139.56V142.43M946.30 141.21V142.04M951.10 136.39V137.51M951.90 136.96V139.29M954.30 137.91V141.06M955.90 139.90V141.74M957.50 141.06V141.97M959.10 141.44V142.95M961.50 143.26V145.11M966.30 146.07V147.52M967.10 146.88V148.39" stroke="#1a8cf0" stroke-width="1.15" fill="none"/>
<path d="M8.40 65.16V67.00M9.20 63.98V65.71M10.80 62.78V64.93M11.60 62.02V62.99M14.80 63.25V64.74M16.40 63.28V64.65M18.80 61.67V63.83M22.80 60.98V62.86M25.20 64.14V65.89M26.00 62.84V64.83M30.00 63.37V64.55M31.60 62.80V63.73M37.20 65.37V66.25M40.00 68.76V69.44M40.80 68.01V69.03M41.60 67.93V68.62M42.40 66.86V68.18M44.00 64.98V68.19M44.80 63.95V65.38M45.60 62.57V64.08M47.20 62.48V64.35M48.80 62.01V62.73M50.40 61.63V63.75M52.00 61.12V63.16M54.40 64.13V64.68M55.20 63.34V64.38M56.00 63.06V63.56M57.60 61.63V63.64M59.20 61.87V63.47M60.80 61.00V62.91M61.60 59.80V61.78M63.20 59.29V59.80M64.80 58.64V60.34M65.60 58.48V59.45M66.40 55.47V58.88M70.40 57.89V59.22M71.20 56.82V58.56M72.80 55.99V57.37M73.60 55.76V56.41M74.40 54.88V56.20M76.00 54.30V55.26M76.80 53.92V54.80M78.40 52.87V54.86M80.00 54.73V55.73M83.20 57.40V58.21M84.00 56.82V57.93M84.80 55.98V57.09M86.40 55.35V57.03M87.20 54.69V56.14M88.00 54.53V55.08M89.60 54.45V56.25M92.80 56.40V57.49M95.20 57.58V58.33M96.80 56.66V58.38M98.40 56.39V57.31M99.20 56.00V56.86M100.00 55.91V56.69M101.60 52.86V56.57M104.00 51.20V53.04M104.80 50.80V51.89M106.40 50.52V51.29M107.20 47.85V50.70M109.60 49.27V49.88M111.20 50.16V50.67M112.00 49.38V50.50M112.80 48.25V49.85M114.40 48.17V49.38M115.20 48.22V48.39M116.00 47.18V48.28M116.80 46.34V47.58M118.40 46.72V47.49M120.00 46.68V47.39M121.60 47.52V47.79M126.40 47.94V49.38M128.00 48.62V49.46M129.60 49.52V50.52M132.00 49.71V51.16M132.80 49.43V49.94M134.40 50.17V52.20M136.00 50.22V50.75M140.00 54.93V57.95M140.80 54.82V55.58M141.60 54.19V55.20M142.40 52.68V54.73M143.20 52.48V53.26M149.60 61.76V63.59M151.20 60.31V62.33M152.00 59.12V61.07M152.80 58.90V59.62M153.60 58.37V59.05M154.40 55.94V58.86M160.00 57.54V59.04M162.40 57.46V59.56M164.00 57.79V59.18M164.80 57.13V58.10M165.60 55.59V57.38M168.00 55.75V58.58M169.60 55.21V56.38M170.40 54.90V55.88M172.00 54.09V55.55M173.60 53.97V54.95M175.20 54.61V55.16M176.80 54.77V55.51M180.00 55.33V56.37M181.60 55.01V57.67M182.40 54.29V55.24M183.20 52.77V54.86M184.80 52.54V55.34M187.20 51.23V53.50M190.40 51.81V53.50M192.00 51.18V54.60M194.40 51.07V53.51M195.20 50.88V51.60M196.80 51.59V52.93M200.80 50.88V53.17M204.00 51.93V53.72M205.60 53.35V54.06M206.40 50.74V53.65M208.00 51.87V53.03M208.80 51.54V52.43M209.60 51.40V52.12M211.20 50.50V53.81M212.80 51.56V52.85M213.60 50.67V51.64M214.40 50.24V50.96M216.00 50.19V51.08M216.80 49.76V50.74M221.60 49.31V52.43M224.00 51.11V52.96M225.60 49.86V52.10M228.80 51.34V51.93M230.40 51.84V53.37M232.00 51.23V52.87M233.60 50.51V52.78M236.00 51.38V51.96M236.80 51.01V51.73M238.40 52.70V54.05M242.40 53.55V55.11M244.00 52.28V52.83M245.60 53.18V54.59M246.40 52.03V53.60M248.00 51.42V54.66M249.60 52.67V53.35M251.20 52.90V53.46M252.00 51.81V53.23M256.00 52.96V54.13M256.80 52.92V53.56M257.60 52.21V53.18M259.20 50.94V53.18M260.80 50.51V51.80M261.60 49.73V50.94M263.20 49.74V50.91M265.60 49.04V50.32M266.40 48.58V49.30M268.80 48.30V49.71M272.00 48.95V50.43M272.80 47.89V49.82M274.40 49.23V50.78M276.00 50.28V51.97M277.60 49.92V50.98M278.40 49.55V50.15M280.80 49.61V52.19M283.20 50.02V51.46M284.80 50.38V51.71M286.40 50.49V51.33M287.20 49.64V51.10M289.60 50.93V51.59M290.40 50.57V51.75M292.00 49.46V52.97M293.60 50.76V51.40M295.20 51.55V52.88M296.00 51.41V52.40M296.80 50.16V52.10M299.20 50.18V51.25M300.80 49.63V51.10M301.60 48.01V50.31M304.00 50.93V51.61M308.80 53.43V55.91M310.40 52.10V53.95M312.80 53.17V54.02M315.20 52.32V55.69M319.20 55.78V56.63M320.80 57.10V58.58M323.20 57.39V59.20M324.80 59.56V60.77M325.60 58.28V59.82M327.20 57.13V59.97M328.80 56.43V57.95M333.60 63.94V64.93M337.60 68.91V70.47M339.20 67.86V69.32M340.00 67.01V68.44M341.60 66.59V67.91M342.40 66.57V67.39M344.00 66.27V67.79M348.00 69.04V69.89M353.60 75.85V78.04M354.40 72.52V76.50M356.00 73.21V75.46M356.80 73.21V73.79M357.60 70.62V73.50M358.40 70.59V71.33M359.20 70.06V70.91M360.80 69.47V71.60M361.60 68.68V70.11M362.40 67.87V68.84M364.00 67.96V69.81M364.80 67.12V68.27M366.40 67.68V68.63M369.60 69.55V71.27M373.80 63.28V64.25M374.60 62.75V64.06M376.20 62.72V64.01M377.00 61.42V62.80M378.60 62.31V63.38M381.80 64.84V66.03M383.40 65.92V66.57M385.80 66.42V67.74M387.40 66.45V68.39M389.00 64.82V66.78M389.80 64.77V65.27M390.60 64.04V65.41M401.00 72.81V73.98M401.80 71.60V73.14M402.60 70.44V72.11M404.20 71.28V72.17M409.80 72.03V75.08M410.60 71.23V72.18M412.20 70.85V72.52M413.80 69.68V71.22M416.20 72.39V73.93M420.20 75.31V76.65M421.00 74.24V75.50M422.60 73.78V75.19M425.80 78.11V79.05M427.40 77.55V79.28M429.00 76.05V78.19M429.80 75.33V76.75M430.60 75.28V76.02M432.20 74.52V76.01M434.60 75.13V75.87M437.00 75.53V77.89M437.80 74.67V75.95M440.20 77.18V78.70M445.00 91.86V96.52M445.80 89.06V92.36M446.60 87.81V89.66M447.40 84.27V88.64M449.00 83.86V85.33M449.80 82.72V84.76M451.40 82.45V83.80M456.20 84.07V85.70M458.60 85.42V86.82M460.20 84.11V85.63M461.00 84.14V84.78M461.80 81.86V84.75M462.60 81.05V82.22M464.20 80.69V82.29M465.00 79.70V81.25M469.00 82.04V84.26M472.20 80.36V82.17M473.00 77.75V81.04M477.00 80.58V81.90M479.40 80.35V82.83M480.20 79.72V80.93M484.20 82.94V84.11M485.00 81.81V83.72M486.60 81.85V82.89M488.20 80.05V82.08M489.00 79.54V80.34M490.60 78.20V80.59M496.20 81.06V82.90M501.80 84.46V88.73M502.60 83.00V85.06M506.60 86.58V87.47M512.20 90.48V92.16M513.80 88.93V91.24M514.60 88.45V89.57M516.20 86.47V89.31M517.80 84.70V87.57M519.40 84.95V85.99M525.80 111.43V115.61M526.60 105.49V111.90M527.40 102.19V106.47M531.40 106.12V107.64M533.80 103.13V106.36M534.60 103.35V103.70M535.40 101.34V103.72M543.6 151.0L544.2 147.0M546.50 134.52V135.15M547.30 131.42V135.02M548.10 128.26V131.70M548.90 126.81V128.70M552.90 135.52V138.81M553.70 133.08V136.43M554.50 129.49V133.65M555.30 128.17V130.42M556.10 125.28V128.41M560.10 126.94V129.99M560.90 124.32V127.12M561.70 123.20V124.87M568.10 124.87V127.19M568.90 123.23V125.21M569.70 121.67V123.66M570.50 121.38V122.32M571.30 118.10V121.95M572.10 116.63V118.47M573.70 116.09V117.42M574.50 114.21V116.54M576.10 112.91V115.34M577.70 111.21V114.22M578.50 110.56V111.48M581.70 112.34V114.41M583.30 113.18V113.91M584.90 112.80V114.03M586.50 110.82V112.20M587.30 110.50V111.49M588.10 109.07V110.70M588.90 107.88V109.45M589.70 105.66V108.53M591.30 106.51V107.96M594.50 108.36V111.52M595.30 107.88V108.86M596.10 106.40V108.43M597.70 105.01V106.92M599.30 104.51V105.79M600.90 104.30V105.63M602.50 105.50V106.46M605.70 106.06V107.67M607.30 103.95V106.88M608.10 103.18V104.45M609.70 101.94V104.08M611.30 100.20V101.38M612.10 98.77V100.70M620.10 120.80V122.42M622.50 124.11V125.24M623.30 123.12V124.29M624.10 121.20V123.79M624.90 117.82V121.33M628.10 117.42V120.18M628.90 117.07V118.24M629.70 115.22V117.38M631.30 114.60V114.80M632.90 114.21V116.67M635.30 116.90V119.25M636.90 116.18V118.17M637.70 116.05V116.49M638.50 115.24V116.21M639.30 114.50V115.90M640.10 112.38V114.55M651.30 130.09V133.26M652.10 128.01V130.74M652.90 127.64V128.34M653.70 126.31V128.38M656.10 127.66V128.52M657.70 127.42V128.31M658.50 125.24V128.10M660.10 121.70V125.83M661.70 122.31V122.83M662.50 119.84V122.53M664.10 120.08V121.61M664.90 117.87V120.40M666.50 117.89V119.35M667.30 116.40V118.54M668.10 116.17V117.17M669.70 115.68V116.91M676.90 123.62V124.77M680.90 129.52V130.40M683.30 127.83V130.28M684.10 125.09V128.49M690.50 137.69V138.72M691.30 134.69V138.13M692.10 132.17V135.21M698.50 156.19V158.13M699.30 154.77V156.49M700.10 153.09V155.37M711.10 168.72V169.46M711.90 165.54V169.26M712.70 162.45V165.81M713.50 159.71V162.83M722.30 175.93V179.93M723.10 171.07V176.73M723.90 167.50V171.70M724.70 165.11V167.88M726.30 164.68V165.83M727.10 163.94V165.08M728.70 161.37V164.48M730.30 160.06V161.81M731.10 159.25V160.36M731.90 157.11V159.91M732.70 156.93V157.88M737.50 156.56V159.15M738.30 155.01V157.47M739.10 153.19V155.14M743.90 156.86V157.65M744.70 156.13V157.14M746.30 152.61V157.79M747.90 151.82V154.13M749.50 150.86V152.89M751.90 150.18V151.71M752.70 148.56V150.58M754.30 146.84V149.34M755.10 146.34V147.21M755.90 144.85V146.58M756.70 143.11V145.55M757.50 142.78V143.61M758.30 140.86V143.01M759.90 138.52V141.59M760.70 137.98V139.22M761.50 137.53V138.60M762.30 136.77V137.71M766.30 140.98V141.53M768.70 141.23V143.12M770.30 140.75V142.94M771.10 139.80V141.17M771.90 138.53V140.53M772.70 137.21V138.94M774.30 136.79V137.86M775.90 135.81V137.25M779.10 137.31V138.35M780.70 139.80V140.41M781.50 138.67V140.15M782.30 137.83V139.30M783.10 136.27V138.66M783.90 135.37V136.85M784.70 133.76V136.03M785.50 133.04V134.27M792.70 142.89V145.60M793.50 139.48V143.50M797.50 142.62V143.65M806.30 150.64V151.11M807.90 149.77V150.14M808.70 149.66V150.23M810.30 146.61V148.72M811.90 144.69V147.66M812.70 142.47V145.38M814.30 142.03V143.64M817.50 144.47V145.61M823.10 150.50V151.03M828.70 155.53V158.12M829.50 153.68V155.80M831.10 153.89V155.19M831.90 153.35V154.36M832.70 153.00V154.05M833.50 151.73V153.59M836.70 153.14V153.63M841.50 155.78V156.68M842.30 155.20V156.29M843.10 153.53V155.63M843.90 151.63V153.89M844.70 151.05V151.94M846.30 148.54V151.25M848.70 146.74V148.78M850.30 146.86V147.33M851.10 145.32V147.35M851.90 143.88V146.10M854.30 143.03V145.89M855.90 143.60V145.53M859.10 145.46V145.98M860.70 145.63V146.45M863.10 144.64V145.79M863.90 142.93V145.00M865.50 140.67V143.70M866.30 139.88V141.11M868.70 139.61V140.87M872.70 136.56V137.55M873.50 135.85V137.08M874.30 134.47V136.68M875.90 133.60V135.29M877.50 134.14V135.64M879.10 132.96V134.68M880.70 132.86V134.33M883.10 133.37V134.55M883.90 132.27V134.21M886.30 132.18V133.90M887.90 131.60V134.23M888.70 130.19V131.67M889.50 128.56V130.31M902.30 140.61V143.68M903.10 139.59V140.98M903.90 138.90V139.93M904.70 138.35V139.24M909.50 140.74V143.13M911.90 142.85V143.59M913.50 142.40V143.43M916.70 143.13V144.30M918.30 143.73V146.11M919.10 142.55V143.86M919.90 141.34V143.35M921.50 140.02V143.15M923.10 138.47V140.95M923.90 137.03V138.88M925.50 137.67V139.23M931.10 139.91V141.79M933.50 138.29V140.29M935.10 137.50V139.52M939.90 141.40V142.23M942.30 140.60V142.76M943.90 139.65V141.57M945.50 140.85V142.00M947.10 141.06V142.03M948.70 138.72V140.31M949.50 138.70V139.56M950.30 136.51V139.08M952.70 137.44V139.61M955.10 139.98V141.04M956.70 140.82V141.41M958.30 141.35V142.21M962.30 143.83V145.13" stroke="#f40c0c" stroke-width="1.15" fill="none"/>
<path d="M6.35 66.37h0.9M13.55 64.29h0.9M16.75 63.09h0.9M17.55 63.43h0.9M19.15 61.69h0.9M19.95 61.77h0.9M20.75 62.35h0.9M27.15 63.59h0.9M27.95 63.52h0.9M28.75 64.38h0.9M30.35 63.50h0.9M33.55 63.65h0.9M34.35 64.42h0.9M35.15 65.40h0.9M37.55 65.44h0.9M47.55 62.60h0.9M52.35 62.26h0.9M61.95 59.75h0.9M63.55 60.00h0.9M67.55 57.45h0.9M71.55 57.15h0.9M74.75 55.25h0.9M90.75 55.20h0.9M95.55 58.01h0.9M97.15 57.02h0.9M101.95 52.41h0.9M105.15 51.25h0.9M118.75 47.22h0.9M121.95 47.47h0.9M123.55 47.40h0.9M124.35 47.45h0.9M134.75 50.66h0.9M144.35 55.75h0.9M147.55 61.79h0.9M149.95 61.89h0.9M155.55 57.69h0.9M157.15 58.16h0.9M158.75 58.91h0.9M161.15 59.11h0.9M166.75 58.12h0.9M168.35 56.06h0.9M185.15 51.50h0.9M188.35 52.29h0.9M197.15 52.00h0.9M197.95 51.92h0.9M199.55 52.73h0.9M217.15 49.96h0.9M222.75 52.57h0.9M226.75 51.49h0.9M239.55 53.46h0.9M242.75 52.60h0.9M253.15 52.80h0.9M254.75 54.11h0.9M263.55 50.06h0.9M264.35 50.07h0.9M269.95 48.86h0.9M279.55 51.74h0.9M297.15 50.23h0.9M309.15 53.67h0.9M313.15 53.29h0.9M317.95 56.29h0.9M321.15 58.20h0.9M337.95 69.32h0.9M340.35 67.50h0.9M352.35 77.89h0.9M387.75 66.69h0.9M394.15 68.03h0.9M406.95 74.14h0.9M407.75 74.03h0.9M412.55 70.97h0.9M417.35 74.95h0.9M433.35 75.83h0.9M458.95 85.41h0.9M466.15 80.37h0.9M470.95 82.00h0.9M482.15 81.64h0.9M490.95 78.67h0.9M510.95 91.98h0.9M512.55 90.80h0.9M531.75 106.16h0.9M532.55 105.92h0.9M537.35 106.68h0.9M558.85 129.57h0.9M564.45 125.54h0.9M585.25 111.92h0.9M596.45 106.60h0.9M598.05 105.38h0.9M599.65 105.28h0.9M606.05 106.74h0.9M610.05 100.96h0.9M625.25 117.82h0.9M626.05 117.82h0.9M630.05 114.79h0.9M645.25 122.98h0.9M654.05 126.35h0.9M671.65 116.52h0.9M673.25 117.94h0.9M681.25 129.85h0.9M727.45 164.40h0.9M729.05 161.70h0.9M734.65 158.61h0.9M735.45 158.68h0.9M764.25 138.94h0.9M774.65 137.09h0.9M777.85 137.92h0.9M791.45 145.15h0.9M795.45 141.58h0.9M797.85 143.08h0.9M800.25 144.55h0.9M801.05 144.66h0.9M801.85 144.39h0.9M806.65 150.01h0.9M809.05 148.68h0.9M815.45 142.55h0.9M818.65 146.16h0.9M821.85 151.01h0.9M823.45 152.05h0.9M824.25 153.08h0.9M825.05 153.78h0.9M833.85 152.15h0.9M835.45 153.59h0.9M837.05 154.48h0.9M837.85 153.98h0.9M838.65 154.28h0.9M840.25 156.47h0.9M845.05 151.01h0.9M847.45 148.45h0.9M853.05 145.54h0.9M857.05 145.69h0.9M857.85 145.74h0.9M859.45 145.96h0.9M861.05 144.76h0.9M864.25 143.50h0.9M866.65 140.41h0.9M867.45 140.65h0.9M869.05 138.68h0.9M869.85 137.95h0.9M870.65 137.02h0.9M874.65 134.81h0.9M877.85 134.67h0.9M881.05 133.33h0.9M884.25 132.41h0.9M889.85 129.58h0.9M892.25 133.23h0.9M897.05 140.26h0.9M898.65 141.59h0.9M900.25 143.33h0.9M901.05 143.40h0.9M905.05 139.54h0.9M906.65 140.75h0.9M908.25 143.00h0.9M914.65 142.19h0.9M925.85 138.09h0.9M927.45 139.32h0.9M929.85 141.38h0.9M931.45 140.01h0.9M932.25 140.01h0.9M933.85 139.45h0.9M935.45 137.73h0.9M937.05 139.01h0.9M941.05 142.50h0.9M942.65 141.29h0.9M947.45 140.19h0.9M953.05 137.97h0.9M959.45 142.55h0.9M960.25 143.39h0.9M962.65 144.14h0.9M963.45 145.18h0.9M964.25 145.90h0.9M965.05 146.51h0.9" stroke="#ecd840" stroke-width="1.0" fill="none"/>
<path d="M40.60 221.32V223.00M41.40 222.81V223.44M42.20 223.34V224.51M46.20 222.66V224.50M49.40 221.91V223.62M52.60 222.91V224.98M56.60 223.33V224.86M59.80 223.60V224.47M61.40 222.90V223.93M63.80 222.31V224.03M70.20 219.39V221.40M71.80 218.91V220.70M74.20 220.65V221.05M75.00 220.65V221.94M77.40 220.19V220.82M78.20 220.16V221.09M79.80 220.95V223.43M80.60 222.99V223.63M84.60 222.84V223.30M87.80 221.61V222.59M91.00 220.53V221.86M94.20 221.28V222.38M95.80 220.53V221.90M98.20 220.89V222.82M101.40 213.78V215.42M103.80 214.23V214.73M106.20 214.03V215.62M107.80 215.25V218.56M108.60 217.86V218.77M109.40 218.28V220.71M111.00 222.98V227.26M111.80 226.84V230.86M114.20 227.35V232.01M119.00 221.38V222.57M122.20 223.37V224.51M123.00 223.88V224.99M124.60 223.46V225.30M127.80 221.94V222.64M129.40 223.46V224.44M130.20 223.80V225.31M131.00 224.99V225.97M131.80 225.44V226.46M134.20 226.99V228.04M135.00 227.48V229.07M136.60 228.52V230.86M137.40 230.51V233.01M138.20 232.84V233.86M139.00 233.57V234.81M140.60 236.36V238.35M142.20 236.57V237.71M144.60 237.46V240.14M145.40 239.68V244.02M155.00 237.13V238.60M163.00 235.84V236.92M167.00 235.99V236.31M168.60 235.19V235.92M171.00 233.14V235.14M177.40 233.39V234.10M179.80 233.60V234.18M180.60 233.40V234.72M184.60 232.77V235.14M188.60 231.94V232.47M191.80 231.35V232.11M196.60 230.64V231.41M198.20 230.13V233.63M200.60 231.14V233.63M205.40 231.96V232.52M206.20 231.75V232.83M209.40 230.60V232.14M211.00 230.94V232.38M213.40 230.85V233.23M217.40 232.68V235.06M219.00 233.90V234.62M219.80 234.24V235.41M221.40 234.75V235.98M223.80 233.99V234.78M225.40 232.93V233.62M234.20 229.85V231.58M235.00 231.08V232.22M237.40 230.65V231.50M242.20 229.31V230.04M243.00 229.29V230.46M247.00 230.67V231.55M247.80 230.91V231.77M250.20 232.18V234.39M251.80 232.19V234.36M254.20 232.50V234.34M258.20 232.82V233.52M260.60 232.28V234.21M264.60 230.75V232.91M273.40 231.33V232.87M275.80 230.83V232.71M279.00 232.85V235.50M280.60 233.16V234.82M283.00 234.08V234.63M286.20 232.83V235.41M289.40 234.15V235.73M293.40 234.50V236.74M303.80 231.23V231.90M305.40 229.95V232.37M307.00 231.16V232.09M307.80 231.82V232.88M312.60 230.76V231.91M315.00 231.05V232.71M316.60 233.45V234.34M317.40 233.78V236.32M318.20 236.05V239.15M320.60 237.97V241.09M322.20 239.75V242.56M326.20 239.79V242.13M328.60 240.80V241.62M329.40 241.06V241.86M330.20 241.10V244.48M332.60 246.79V249.18M333.40 248.73V251.85M335.00 252.74V254.07M335.80 253.56V256.41M336.60 255.67V257.29M337.40 256.95V258.94M342.20 256.71V257.45M345.40 257.54V259.48M347.00 258.97V260.07M347.80 259.54V260.92M348.60 260.25V262.82M349.40 262.47V265.51M350.20 265.01V266.06M351.00 265.51V269.15M351.80 268.74V269.48M352.60 268.95V270.98M353.40 270.54V272.56M361.40 266.11V267.64M364.60 265.04V267.62M369.40 270.93V273.85M370.20 273.42V276.46M371.80 275.84V278.62M380.80 267.73V268.95M382.40 269.41V272.29M384.80 272.19V272.96M388.80 273.15V274.09M390.40 273.65V276.14M391.20 275.89V277.59M392.00 277.10V280.99M392.80 280.44V282.39M395.20 285.24V288.18M396.00 287.36V289.50M398.40 290.44V292.15M403.20 294.00V295.57M404.00 294.80V296.09M405.60 295.32V296.86M407.20 296.49V297.35M408.80 298.53V299.97M417.60 293.63V295.31M420.00 293.47V294.39M421.60 293.03V294.60M422.40 294.16V296.08M424.80 297.99V299.68M425.60 299.14V300.74M427.20 299.34V300.87M429.60 297.75V298.64M433.60 297.05V297.76M436.00 296.56V298.17M438.40 296.89V297.63M440.00 296.89V299.14M441.60 298.71V303.51M442.40 303.28V309.54M443.20 308.82V310.84M444.00 310.28V313.71M444.80 313.10V316.42M449.60 307.93V310.42M451.20 308.85V310.32M453.60 309.01V309.39M454.40 308.98V310.03M457.60 310.93V311.79M460.00 310.99V312.76M464.00 311.87V313.27M465.60 312.79V315.23M470.40 312.42V313.44M475.20 308.44V309.19M476.00 308.66V309.81M480.80 306.98V308.99M488.80 304.91V306.28M491.20 304.32V307.52M492.80 305.37V306.26M496.80 307.03V309.23M498.40 307.82V309.92M500.00 308.54V309.93M500.80 309.41V311.22M502.40 310.18V310.88M504.00 310.12V310.61M507.20 310.99V311.87M508.80 311.21V313.49M511.20 314.41V316.98M515.20 316.67V317.97M516.00 317.68V319.90M521.60 317.54V319.60M522.40 319.37V321.81M523.20 321.16V323.90M524.00 323.72V326.20M524.80 325.59V329.41M525.60 328.65V329.95M526.40 329.32V332.66M529.60 335.35V336.43M530.40 336.22V337.29M532.00 336.32V339.68M535.20 337.38V338.58M536.80 337.56V340.59M537.60 339.91V342.39M538.40 341.75V344.47M540.00 343.71V346.64M541.60 346.38V348.69M549.60 349.69V350.58M550.40 350.55V351.26M551.20 350.60V353.90M556.80 347.45V348.08M560.00 346.38V347.47M560.80 346.93V348.80M578.60 328.18V329.69M586.60 318.68V320.80M587.40 320.37V321.76M593.00 315.77V316.76M599.40 313.23V314.38M601.00 311.46V312.89M603.40 313.93V314.64M620.40 316.78V319.25M621.20 318.37V320.21M632.10 314.79V319.75M632.90 319.23V323.41M633.70 322.65V324.78M635.30 323.67V324.71M636.10 324.04V325.05M640.90 322.85V323.59M641.70 323.17V324.77M644.10 325.88V328.03M649.70 327.71V328.97M650.50 328.25V329.98M651.30 329.19V331.84M658.30 322.25V323.13M667.10 315.97V317.81M670.30 316.73V318.85M673.50 317.69V319.25M683.00 324.47V325.41M684.60 323.28V326.58M687.80 329.44V331.73M688.60 331.43V333.82M690.20 334.15V337.10M697.50 344.41V349.32M699.10 351.26V353.26M699.90 352.26V353.62M701.50 354.62V356.79M702.30 356.58V359.54M707.10 356.07V357.95M708.70 355.79V357.97M710.30 357.05V359.46M719.10 347.83V349.18M721.50 349.27V352.85M748.60 338.51V340.02M750.20 338.17V339.22M786.10 321.84V323.23M788.50 323.18V324.00M790.10 325.97V326.93M824.1 335.0L825.1 335.6M826.9 336.6L827.6 338.2M873.2 318.5L874.5 318.9M877.3 317.1L878.3 317.1M930.5 315.0L931.8 317.0M947.5 314.0L949.5 315.5M951.5 313.8L953.0 313.8M957.4 315.5L957.9 320.0M962.5 319.5L964.0 320.3M966.5 320.5L967.2 323.5" stroke="#1a8cf0" stroke-width="1.15" fill="none"/>
<path d="M35.8 227.4L36.6 227.4M39.80 221.65V225.53M45.40 222.26V223.85M47.00 222.18V224.14M48.60 221.95V222.96M51.80 222.79V223.74M54.20 223.02V225.28M57.40 223.23V224.93M59.00 223.77V224.65M63.00 222.19V224.08M65.40 221.83V222.98M67.80 220.59V222.37M69.40 219.37V221.10M71.00 219.15V221.22M73.40 220.77V221.38M83.00 223.03V224.01M86.20 221.71V222.88M92.60 221.11V221.75M95.00 220.47V222.26M96.60 220.75V221.92M99.80 220.52V222.84M100.60 213.75V220.80M103.00 213.99V215.64M112.60 227.50V230.80M113.40 227.45V228.20M117.40 223.27V224.66M118.20 221.12V223.49M123.80 223.61V224.69M126.20 223.32V224.38M127.00 221.50V223.83M143.00 236.55V237.87M148.60 243.32V245.15M149.40 242.03V243.70M150.20 241.47V242.69M151.80 239.37V241.56M154.20 237.22V239.95M158.20 236.42V237.24M159.00 235.50V236.59M160.60 236.07V237.29M161.40 236.09V236.56M164.60 235.25V236.31M167.80 234.79V236.57M169.40 234.34V235.71M170.20 233.13V234.80M176.60 233.46V235.30M181.40 232.66V234.57M183.80 233.13V234.68M185.40 233.23V235.02M187.80 232.20V233.04M189.40 231.90V232.64M197.40 230.21V231.21M199.80 230.92V232.61M201.40 231.63V233.86M202.20 231.61V232.18M204.60 231.97V232.95M208.60 230.84V231.77M210.20 230.78V231.90M212.60 231.24V232.11M218.20 234.04V234.79M222.20 233.98V235.76M224.60 232.60V234.94M227.00 232.08V233.92M229.40 232.31V233.41M233.40 229.98V232.81M238.20 229.76V231.61M239.80 229.70V230.74M241.40 229.18V229.84M244.60 229.77V230.50M246.20 230.62V231.15M251.00 232.44V234.18M255.80 233.02V235.15M256.60 233.02V233.48M259.80 232.00V232.92M261.40 231.76V234.08M262.20 231.53V232.36M263.00 230.94V232.11M266.20 231.20V231.84M268.60 230.32V230.95M269.40 229.50V230.73M278.20 232.62V233.22M279.80 233.35V235.64M283.80 232.72V234.84M290.20 234.93V235.55M291.80 235.44V236.37M295.00 233.35V235.57M298.20 231.47V233.29M299.00 230.98V232.15M299.80 230.74V231.38M300.60 228.47V230.89M304.60 230.17V231.97M314.20 231.10V233.27M323.00 241.27V242.48M341.40 256.80V259.03M344.60 257.35V257.91M355.00 269.65V271.78M356.60 268.31V270.53M357.40 267.11V268.97M359.00 265.89V269.01M363.80 265.38V266.67M371.00 275.62V276.19M375.20 269.27V270.40M376.00 267.43V269.71M376.80 265.66V268.07M377.60 265.12V266.21M378.40 263.72V265.30M385.60 271.48V273.24M387.20 272.35V273.51M396.80 288.54V289.40M400.80 293.35V295.00M402.40 294.20V296.04M404.80 295.53V295.90M409.60 297.59V299.95M413.60 294.83V296.13M416.00 294.71V295.51M416.80 293.69V295.24M428.00 297.69V301.14M431.20 297.10V297.91M434.40 295.80V297.48M439.20 296.82V297.44M440.80 298.26V299.40M445.60 315.24V316.86M447.20 312.70V313.91M448.80 308.07V311.26M450.40 308.72V310.62M452.00 309.29V310.32M455.20 308.78V309.73M461.60 312.40V313.16M467.20 313.77V314.37M468.00 313.07V314.09M472.80 310.18V312.96M473.60 310.20V310.65M474.40 308.76V310.38M478.40 310.18V311.73M479.20 308.80V310.66M484.00 308.60V309.21M486.40 308.17V309.50M487.20 307.48V308.95M488.00 304.89V308.16M489.60 304.77V305.99M499.20 308.62V309.56M516.80 318.61V320.08M517.60 318.59V319.37M518.40 317.59V319.13M519.20 316.45V318.48M531.20 336.06V337.37M532.80 338.06V339.43M544.80 359.02V359.78M545.60 356.01V359.60M552.00 352.70V353.86M554.40 350.76V354.37M555.20 347.97V351.61M557.60 347.34V348.01M564.00 348.81V349.36M565.60 346.40V348.84M566.40 345.96V346.71M568.00 344.27V345.80M568.80 344.13V345.21M569.60 342.92V344.85M571.20 340.95V341.92M572.00 340.78V341.44M572.80 340.71V341.38M584.20 319.96V323.59M585.00 318.55V320.22M589.80 320.68V322.68M590.60 318.99V321.34M592.20 315.51V318.55M593.80 315.60V316.42M594.60 313.86V315.78M595.40 313.70V314.72M597.80 313.18V314.74M600.20 311.73V314.09M605.00 314.77V315.93M607.40 315.21V315.99M609.80 313.83V314.68M610.60 312.42V314.31M611.40 311.40V312.94M612.20 309.84V311.98M624.40 320.19V322.92M626.00 319.83V320.58M626.80 318.55V320.30M634.50 323.97V324.97M637.70 324.52V325.37M640.10 322.89V324.25M648.90 327.50V329.05M656.70 321.10V323.40M659.10 321.51V323.22M662.30 320.93V323.44M664.70 318.05V320.35M665.50 317.26V318.68M669.50 316.66V318.67M683.80 323.58V325.48M686.20 325.92V327.35M691.00 333.09V336.73M692.60 331.40V332.60M703.10 358.23V359.56M704.70 356.55V358.79M707.90 355.87V358.00M711.10 358.53V359.41M711.90 358.08V358.84M713.50 355.98V357.74M715.90 353.14V354.42M716.70 349.88V353.35M717.50 347.12V350.31M728.00 352.01V353.11M730.40 348.08V351.32M732.00 348.36V349.48M737.0 346.8L739.7 346.2M745.40 342.27V346.40M747.00 340.49V342.87M747.80 338.61V340.93M749.40 338.03V340.20M751.00 337.80V339.16M751.80 337.90V338.64M752.60 337.06V337.99M755.00 332.29V335.22M755.80 330.45V332.77M758.20 330.91V331.39M759.00 329.43V331.62M762.0 328.0L765.0 326.9M769.0 326.3L772.0 325.8M775.0 325.5L777.0 324.8M854.6 327.0L855.6 326.6M858.2 324.3L859.2 323.9M881.8 317.1L885.0 317.1" stroke="#f40c0c" stroke-width="1.15" fill="none"/>
<path d="M8.6 227.8L9.4 227.8M42.55 223.55h0.9M44.15 223.72h0.9M47.35 222.73h0.9M49.75 223.58h0.9M50.55 223.66h0.9M52.95 225.05h0.9M54.55 223.75h0.9M55.35 223.78h0.9M68.15 221.05h0.9M78.55 221.31h0.9M81.75 224.00h0.9M84.95 222.39h0.9M86.55 221.99h0.9M88.95 221.71h0.9M91.35 221.62h0.9M96.95 221.14h0.9M98.55 222.57h0.9M101.75 215.19h0.9M106.55 215.31h0.9M120.15 223.09h0.9M135.35 228.84h0.9M140.95 237.05h0.9M143.35 237.88h0.9M150.55 241.19h0.9M164.95 236.45h0.9M165.75 236.17h0.9M172.95 233.85h0.9M177.75 234.19h0.9M178.55 233.72h0.9M185.75 233.19h0.9M186.55 232.74h0.9M192.15 231.42h0.9M194.55 230.68h0.9M198.55 232.50h0.9M203.35 232.71h0.9M207.35 231.63h0.9M211.35 232.02h0.9M215.35 232.46h0.9M216.15 232.86h0.9M225.75 233.62h0.9M228.15 233.05h0.9M229.75 232.78h0.9M231.35 232.63h0.9M232.15 232.54h0.9M235.35 231.90h0.9M238.55 230.33h0.9M243.35 230.31h0.9M248.15 232.49h0.9M248.95 232.43h0.9M256.95 233.10h0.9M263.35 231.25h0.9M266.55 230.79h0.9M270.55 230.29h0.9M276.95 233.09h0.9M280.95 234.84h0.9M284.15 233.65h0.9M288.15 234.16h0.9M295.35 233.73h0.9M301.75 230.55h0.9M308.15 232.44h0.9M309.75 232.30h0.9M318.55 238.41h0.9M326.55 241.23h0.9M330.55 244.96h0.9M338.55 258.42h0.9M343.35 257.74h0.9M355.35 270.41h0.9M361.75 266.82h0.9M362.55 266.26h0.9M364.95 266.91h0.9M378.75 265.28h0.9M382.75 271.42h0.9M387.55 273.61h0.9M389.15 273.78h0.9M398.75 291.93h0.9M405.95 296.62h0.9M417.95 295.38h0.9M428.35 298.24h0.9M429.95 297.76h0.9M434.75 296.88h0.9M464.35 313.24h0.9M465.95 314.28h0.9M469.15 312.92h0.9M481.15 308.45h0.9M482.75 308.97h0.9M485.15 309.00h0.9M493.15 306.59h0.9M493.95 307.16h0.9M494.75 307.06h0.9M495.55 307.25h0.9M497.15 307.98h0.9M502.75 310.27h0.9M504.35 310.60h0.9M505.95 311.18h0.9M507.55 311.30h0.9M509.15 314.14h0.9M513.95 317.16h0.9M527.55 334.35h0.9M533.95 337.52h0.9M538.75 343.76h0.9M540.35 346.66h0.9M555.55 347.47h0.9M558.75 346.60h0.9M562.75 349.33h0.9M564.35 348.48h0.9M566.75 345.38h0.9M581.35 326.40h0.9M582.95 323.12h0.9M585.35 318.83h0.9M588.55 322.67h0.9M590.95 318.22h0.9M596.55 314.56h0.9M598.15 313.65h0.9M605.35 314.93h0.9M607.75 315.43h0.9M623.15 322.43h0.9M624.75 320.44h0.9M630.85 315.23h0.9M638.85 323.92h0.9M646.05 328.49h0.9M646.85 328.53h0.9M647.65 328.57h0.9M660.25 322.44h0.9M661.05 323.24h0.9M667.45 317.75h0.9M670.65 317.41h0.9M671.45 316.75h0.9M673.85 319.90h0.9M691.35 332.56h0.9M705.05 357.19h0.9M709.05 357.24h0.9M714.65 354.28h0.9M729.15 351.21h0.9M744.15 345.99h0.9M745.75 342.57h0.9M752.95 337.53h0.9M812.2 328.8L813.2 328.8M840.7 335.2L841.7 335.2M912.0 316.6L913.0 316.6M919.0 317.1L921.5 317.1M924.7 313.8L925.7 313.8" stroke="#ecd840" stroke-width="1.0" fill="none"/>
<path d="M7.40 504.28L8.20 502.08L9.00 500.95L9.80 500.10L10.60 498.20L11.40 496.52L12.20 496.15L13.00 498.05L13.80 497.66L14.60 500.11L15.40 500.35L16.20 500.18L17.00 500.77L17.80 499.14L18.60 499.73L19.40 495.13L20.20 495.81L21.00 494.28L21.80 494.77L22.60 498.74L23.40 499.79L24.20 500.69L25.00 499.04L25.80 497.92L26.60 498.70L27.40 496.86L28.20 497.11L29.00 496.68L29.80 496.68L30.60 497.23L31.40 498.23L32.20 498.43L33.00 499.38L33.80 499.29L34.60 500.65L35.40 500.17L36.20 500.80L37.00 502.73L37.80 501.92L38.60 502.38L39.40 504.91L40.20 509.61L41.00 510.46L41.80 508.86L42.60 506.62L43.40 505.57L44.20 503.38L45.00 504.38L45.80 504.28L46.60 503.80L47.40 503.16L48.20 502.47L49.00 503.53L49.80 500.88L50.60 501.95L51.40 502.76L52.20 502.79L53.00 502.40L53.80 502.83L54.60 502.09L55.40 502.10L56.20 502.28L57.00 502.52L57.80 500.97L58.60 501.58L59.40 502.03L60.20 502.82L61.00 502.94L61.80 502.38L62.60 501.48L63.40 500.43L64.20 498.02L65.00 497.50L65.80 497.81L66.60 494.59L67.40 493.79L68.20 496.06L69.00 497.06L69.80 496.51L70.60 494.66L71.40 492.54L72.20 493.02L73.00 492.79L73.80 491.94L74.60 493.14L75.40 494.28L76.20 494.90L77.00 495.10L77.80 494.63L78.60 493.76L79.40 491.90L80.20 491.99L81.00 491.62L81.80 492.43L82.60 491.73L83.40 489.52L84.20 488.31L85.00 490.52L85.80 492.22L86.60 492.84L87.40 492.38L88.20 492.93L89.00 493.37L89.80 493.96L90.60 492.93L91.40 493.92L92.20 493.87L93.00 495.63L93.80 496.93L94.60 498.55L95.40 498.91L96.20 497.31L97.00 494.62L97.80 492.92L98.60 494.39L99.40 493.96L100.20 495.46L101.00 497.99L101.80 499.40L102.60 498.40L103.40 495.96L104.20 494.67L105.00 493.31L105.80 490.76L106.60 489.80L107.40 489.16L108.20 486.37L109.00 483.57L109.80 483.04L110.60 479.61L111.40 476.36L112.20 469.78L113.00 469.29L113.80 472.87L114.60 472.34L115.40 469.32L116.20 470.72L117.00 471.62L117.80 475.61L118.60 476.57L119.40 476.78L120.20 475.95L121.00 474.27L121.80 474.57L122.60 475.08L123.40 474.46L124.20 473.62L125.00 473.03L125.80 473.93L126.60 475.54L127.40 475.31L128.20 476.79L129.00 479.54L129.80 481.77L130.60 482.74L131.40 481.54L132.20 477.50L133.00 475.81L133.80 472.49L134.60 474.12L135.40 474.18L136.20 473.45L137.00 473.56L137.80 475.97L138.60 475.44L139.40 469.35L140.20 466.36L141.00 465.14L141.80 466.25L142.60 465.03L143.40 463.82L144.20 461.25L145.00 459.80L145.80 461.04L146.60 463.94L147.40 468.11L148.20 470.97L149.00 474.19L149.80 474.49L150.60 470.88L151.40 466.79L152.20 466.86L153.00 469.85L153.80 470.08L154.60 470.97L155.40 472.22L156.20 472.80L157.00 472.60L157.80 476.25L158.60 476.64L159.40 477.16L160.20 477.18L161.00 475.31L161.80 473.38L162.60 474.69L163.40 477.07L164.20 476.23L165.00 475.05L165.80 472.64L166.60 471.80L167.40 471.43L168.20 471.32L169.00 474.15L169.80 474.99L170.60 475.12L171.40 474.40L172.20 474.55L173.00 473.46L173.80 473.87L174.60 472.42L175.40 474.34L176.20 472.08L177.00 471.14L177.80 468.52L178.60 470.55L179.40 471.93L180.20 472.80L181.00 472.63L181.80 473.17L182.60 471.65L183.40 473.90L184.20 470.16L185.00 471.14L185.80 470.28L186.60 469.06L187.40 468.41L188.20 468.93L189.00 468.18L189.80 469.75L190.60 468.75L191.40 469.65L192.20 470.47L193.00 469.96L193.80 470.25L194.60 470.97L195.40 471.06L196.20 471.11L197.00 471.88L197.80 471.35L198.60 469.57L199.40 471.52L200.20 470.04L201.00 470.26L201.80 465.89L202.60 467.20L203.40 468.00L204.20 467.56L205.00 467.89L205.80 467.63L206.60 468.90L207.40 467.17L208.20 466.31L209.00 466.46L209.80 467.97L210.60 471.13L211.40 471.26L212.20 467.84L213.00 468.19L213.80 467.94L214.60 467.01L215.40 465.31L216.20 465.16L217.00 464.24L217.80 465.81L218.60 465.92L219.40 462.52L220.20 464.24L221.00 463.73L221.80 463.46L222.60 463.42L223.40 461.39L224.20 462.56L225.00 465.47L225.80 463.13L226.60 464.25L227.40 464.22L228.20 463.78L229.00 465.19L229.80 467.79L230.60 467.47L231.40 468.58L232.20 467.90L233.00 470.10L233.80 468.89L234.60 468.62L235.40 469.03L236.20 469.60L237.00 470.28L237.80 472.29L238.60 471.93L239.40 473.02L240.20 474.92L241.00 475.73L241.80 476.00L242.60 475.52L243.40 474.18L244.20 473.05L245.00 472.97L245.80 472.02L246.60 472.02L247.40 471.52L248.20 472.77L249.00 472.81L249.80 473.82L250.60 472.92L251.40 471.64L252.20 470.45L253.00 469.30L253.80 470.30L254.60 467.54L255.40 468.24L256.20 467.92L257.00 468.77L257.80 467.94L258.60 468.42L259.40 469.40L260.20 468.42L261.00 469.22L261.80 466.09L262.60 465.56L263.40 467.90L264.20 465.59L265.00 464.72L265.80 464.04L266.60 463.72L267.40 464.54L268.20 464.74L269.00 465.40L269.80 466.31L270.60 465.49L271.40 466.04L272.20 466.04L273.00 465.32L273.80 463.25L274.60 462.81L275.40 463.79L276.20 462.82L277.00 462.70L277.80 462.29L278.60 460.84L279.40 460.62L280.20 460.02L281.00 461.82L281.80 461.31L282.60 462.40L283.40 463.46L284.20 463.60L285.00 464.89L285.80 462.63L286.60 463.82L287.40 462.54L288.20 463.34L289.00 464.69L289.80 462.51L290.60 464.35L291.40 462.76L292.20 460.93L293.00 460.55L293.80 460.26L294.60 461.06L295.40 462.04L296.20 464.87L297.00 464.56L297.80 466.96L298.60 467.87L299.40 466.28L300.20 468.55L301.00 469.56L301.80 469.60L302.60 469.30L303.40 471.26L304.20 472.19L305.00 472.07L305.80 472.02L306.60 472.70L307.40 472.03L308.20 469.64L309.00 470.64L309.80 470.51L310.60 470.45L311.40 472.42L312.20 469.89L313.00 471.49L313.80 470.64L314.60 471.26L315.40 470.94L316.20 471.44L317.00 471.40L317.80 470.06L318.60 469.93L319.40 467.37L320.20 467.58L321.00 469.36L321.80 469.30L322.60 469.82L323.40 472.09L324.20 471.01L325.00 470.32L325.80 468.22L326.60 465.68L327.40 465.73L328.20 465.91L329.00 465.40L329.80 464.51L330.60 463.54L331.40 463.46L332.20 464.14L333.00 463.78L333.80 462.33L334.60 460.99L335.40 459.23L336.20 458.72L337.00 460.88L337.80 462.73L338.60 464.54L339.40 459.40L340.20 455.98L341.00 456.77L341.80 456.50L342.60 457.67L343.40 459.39L344.20 457.72L345.00 458.59L345.80 457.72L346.60 456.25L347.40 456.10L348.20 457.85L349.00 454.86L349.80 455.34L350.60 454.01L351.40 452.10L352.20 452.66L353.00 451.85L353.80 450.52L354.60 447.16L355.40 446.83L356.20 447.37L357.00 447.02L357.80 447.53L358.60 448.32L359.40 448.89L360.20 448.65L361.00 448.73L361.80 448.65L362.60 445.17L363.40 447.81L364.20 446.11L365.00 445.99L365.80 444.16L366.60 443.95L367.40 442.98L368.20 442.71L369.00 443.18L369.80 441.48L370.60 441.58L371.40 440.78L372.20 442.17L373.00 440.38L373.80 435.53L374.60 429.34L375.40 430.89L376.20 429.70L377.00 432.21L377.80 436.52L378.60 436.81L379.40 438.03L380.20 437.02L381.00 436.79L381.80 437.14L382.60 436.25L383.40 436.38L384.20 433.77L385.00 432.93L385.80 431.72L386.60 431.66L387.40 430.00L388.20 428.75L389.00 428.49L389.80 426.51L390.60 426.64L391.40 424.33L392.20 422.71L393.00 420.95L393.80 418.36L394.60 415.71L395.40 415.35L396.20 413.33L397.00 413.15L397.80 412.34L398.60 410.10L399.40 411.80L400.20 412.69L401.00 415.08L401.80 413.67L402.60 410.22L403.40 406.35L404.20 406.67L405.00 410.55L405.80 411.16L406.60 411.93L407.40 407.99L408.20 408.17L409.00 405.07L409.80 405.97L410.60 408.39L411.40 409.10L412.20 406.83L413.00 404.48L413.80 403.33L414.60 404.45L415.40 407.79L416.20 407.46L417.00 409.52L417.80 411.49L418.60 414.60L419.40 416.70L420.20 417.58L421.00 418.42L421.80 416.01L422.60 415.32L423.40 413.77L424.20 412.69L425.00 410.66L425.80 410.61L426.60 411.13L427.40 412.41L428.20 412.39L429.00 412.49L429.80 410.99L430.60 409.75L431.40 408.54L432.20 408.52L433.00 408.11L433.80 409.80L434.60 412.33L435.40 413.04L436.20 413.40L437.00 413.43L437.80 413.36L438.60 411.15L439.40 410.16L440.20 413.50L441.00 417.71L441.80 421.13L442.60 424.98L443.40 426.03L444.20 426.32L445.00 423.01L445.80 417.96L446.60 413.51L447.40 408.33L448.20 409.32L449.00 406.12L449.80 405.64L450.60 404.75L451.40 403.94L452.20 402.29L453.00 405.11L453.80 408.38L454.60 411.51L455.40 409.88L456.20 409.92L457.00 405.85L457.80 404.60L458.60 405.98L459.40 405.87L460.20 406.22L461.00 405.51L461.80 405.86L462.60 404.51L463.40 402.07L464.20 399.70L465.00 398.09L465.80 396.69L466.60 396.57L467.40 400.06L468.20 399.59L469.00 400.15L469.80 400.35L470.60 397.41L471.40 397.12L472.20 395.70L473.00 394.76L473.80 395.82L474.60 396.89L475.40 401.24L476.20 400.18L477.00 401.67L477.80 400.24L478.60 400.78L479.40 401.93L480.20 403.57L481.00 404.62L481.80 405.69L482.60 406.52L483.40 408.87L484.20 407.30L485.00 406.67L485.80 407.43L486.60 406.91L487.40 406.08L488.20 404.37L489.00 407.62L489.80 405.71L490.60 404.61L491.40 404.98L492.20 407.96L493.00 408.46L493.80 410.21L494.60 410.68L495.40 409.66L496.20 410.72L497.00 408.25L497.80 408.30L498.60 408.68L499.40 411.08L500.20 411.74L501.00 412.00L501.80 411.40L502.60 408.49L503.40 408.43L504.20 410.07L505.00 412.30L505.80 413.87L506.60 413.91L507.40 415.68L508.20 415.57L509.00 414.60L509.80 412.24L510.60 411.07L511.40 412.32L512.20 410.63L513.00 410.51L513.80 409.62L514.60 409.02L515.40 409.74L516.20 407.40L517.00 405.71L517.80 403.24L518.60 399.00L519.40 399.72L520.20 399.81L521.00 401.51L521.80 404.39L522.60 403.75L523.40 413.70L524.20 424.57L525.00 431.91L525.80 421.27L526.60 412.42L527.40 403.48L528.20 404.61L529.00 408.94L529.80 409.07L530.60 408.84L531.40 406.62L532.20 405.00L533.00 402.44L533.80 399.88L534.60 397.25L535.40 395.52L536.20 396.82L537.00 398.22L537.80 398.76L538.60 399.57L539.40 407.98L540.20 415.97L541.00 423.15L541.80 430.25L542.60 437.54L543.40 444.70L544.20 452.85L545.00 458.27L545.80 456.97L546.60 454.04L547.40 441.40L548.20 429.52L549.00 424.54L549.80 425.17L550.60 436.18L551.40 449.59L552.20 444.74L553.00 435.45L553.80 428.15L554.60 424.80L555.40 425.05L556.20 426.82L557.00 427.16L557.80 429.83L558.60 432.64L559.40 434.31L560.20 430.75L561.00 427.33L561.80 423.73L562.60 420.41L563.40 423.46L564.20 426.18L565.00 426.51L565.80 425.71L566.60 423.54L567.40 426.47L568.20 430.46L569.00 431.27L569.80 428.22L570.60 425.31L571.40 425.30L572.20 422.12L573.00 419.99L573.80 420.46L574.60 420.25L575.40 418.00L576.20 416.94L577.00 414.27L577.80 419.09L578.60 428.61L579.40 431.20L580.20 433.21L581.00 435.67L581.80 437.49L582.60 439.83L583.40 442.60L584.20 446.00L585.00 446.08L585.80 442.78L586.60 441.11L587.40 439.04L588.20 436.58L589.00 436.02L589.80 436.91L590.60 437.73L591.40 437.77L592.20 436.86L593.00 441.80L593.80 444.77L594.60 442.88L595.40 438.11L596.20 441.70L597.00 445.46L597.80 444.08L598.60 441.13L599.40 438.31L600.20 440.63L601.00 444.48L601.80 446.10L602.60 446.59L603.40 446.03L604.20 444.88L605.00 444.61L605.80 441.46L606.60 441.65L607.40 441.24L608.20 441.09L609.00 441.50L609.80 439.50L610.60 437.83L611.40 436.92L612.20 435.88L613.00 440.84L613.80 443.85L614.60 450.75L615.40 460.11L616.20 465.58L617.00 469.60L617.80 470.91L618.60 473.25L619.40 471.30L620.20 467.17L621.00 468.39L621.80 467.79L622.60 462.31L623.40 457.98L624.20 457.27L625.00 458.83L625.80 460.69L626.60 461.32L627.40 459.53L628.20 457.28L629.00 454.44L629.80 452.84L630.60 452.72L631.40 457.02L632.20 460.65L633.00 457.92L633.80 455.20L634.60 451.91L635.40 449.78L636.20 447.80L637.00 444.10L637.80 441.73L638.60 441.70L639.40 442.55L640.20 443.44L641.00 444.24L641.80 445.61L642.60 447.26L643.40 447.77L644.20 449.74L645.00 452.50L645.80 453.87L646.60 454.52L647.40 453.95L648.20 454.30L649.00 458.49L649.80 461.40L650.60 463.97L651.40 461.84L652.20 456.06L653.00 452.37L653.80 450.96L654.60 455.95L655.40 456.46L656.20 461.00L657.00 465.62L657.80 467.59L658.60 466.52L659.40 464.66L660.20 463.71L661.00 460.38L661.80 461.36L662.60 458.53L663.40 459.19L664.20 461.05L665.00 460.71L665.80 464.38L666.60 463.25L667.40 461.52L668.20 461.64L669.00 457.91L669.80 458.14L670.60 456.04L671.40 456.93L672.20 459.19L673.00 459.96L673.80 462.66L674.60 463.71L675.40 464.12L676.20 467.40L677.00 467.87L677.80 470.89L678.60 472.74L679.40 477.41L680.20 478.77L681.00 479.90L681.80 478.39L682.60 475.21L683.40 469.80L684.20 466.78L685.00 465.22L685.80 470.87L686.60 475.32L687.40 473.21L688.20 473.70L689.00 472.10L689.80 469.75L690.60 469.01L691.40 467.38L692.20 468.53L693.00 468.83L693.80 480.42L694.60 492.03L695.40 496.95L696.20 496.61L697.00 483.43L697.80 470.50L698.60 471.32L699.40 469.31L700.20 470.52L701.00 480.20L701.80 488.94L702.60 494.08L703.40 497.49L704.20 499.20L705.00 500.38L705.80 498.74L706.60 498.25L707.40 498.31L708.20 496.74L709.00 498.90L709.80 497.16L710.60 496.24L711.40 491.03L712.20 487.34L713.00 479.64L713.80 479.41L714.60 484.62L715.40 490.47L716.20 494.02L717.00 499.28L717.80 504.25L718.60 507.60L719.40 509.44L720.20 511.67L721.00 519.62L721.80 525.53L722.60 512.12L723.40 501.73L724.20 496.51L725.00 493.01L725.80 491.86L726.60 492.44L727.40 493.95L728.20 493.02L729.00 490.63L729.80 487.60L730.60 484.08L731.40 484.10L732.20 488.81L733.00 489.51L733.80 491.28L734.60 489.39L735.40 489.72L736.20 491.33L737.00 489.76L737.80 485.92L738.60 484.48L739.40 482.05L740.20 485.26L741.00 485.61L741.80 487.54L742.60 489.46L743.40 492.47L744.20 493.78L745.00 494.36L745.80 490.56L746.60 487.84L747.40 489.74L748.20 491.41L749.00 490.82L749.80 487.55L750.60 485.94L751.40 488.26L752.20 490.65L753.00 490.86L753.80 488.76L754.60 486.41L755.40 484.65L756.20 487.28L757.00 491.58L757.80 491.15L758.60 489.90L759.40 485.77L760.20 482.42L761.00 480.44L761.80 481.26L762.60 481.39L763.40 483.00L764.20 481.85L765.00 484.75L765.80 485.73L766.60 489.29L767.40 490.03L768.20 491.39L769.00 491.35L769.80 493.36L770.60 489.31L771.40 484.38L772.20 481.19L773.00 479.99L773.80 479.66L774.60 475.89L775.40 477.65L776.20 479.21L777.00 481.49L777.80 482.98L778.60 484.81L779.40 484.73L780.20 485.27L781.00 487.09L781.80 488.06L782.60 485.15L783.40 481.17L784.20 478.72L785.00 478.01L785.80 481.78L786.60 482.61L787.40 483.18L788.20 485.64L789.00 483.84L789.80 484.83L790.60 486.78L791.40 491.14L792.20 492.80L793.00 493.59L793.80 492.79L794.60 493.23L795.40 494.38L796.20 492.80L797.00 494.51L797.80 493.51L798.60 494.74L799.40 494.65L800.20 494.79L801.00 495.05L801.80 493.72L802.60 496.84L803.40 499.52L804.20 502.94L805.00 503.92L805.80 505.72L806.60 505.69L807.40 508.71L808.20 508.10L809.00 507.17L809.80 505.89L810.60 503.18L811.40 500.73L812.20 498.28L813.00 496.13L813.80 491.85L814.60 488.59L815.40 487.92L816.20 488.76L817.00 490.67L817.80 492.39L818.60 493.54L819.40 496.27L820.20 498.06L821.00 499.71L821.80 501.98L822.60 503.22L823.40 505.51L824.20 504.90L825.00 503.91L825.80 501.08L826.60 497.72L827.40 498.23L828.20 495.53L829.00 492.44L829.80 492.65L830.60 490.49L831.40 490.89L832.20 490.45L833.00 490.75L833.80 490.22L834.60 490.12L835.40 489.82L836.20 491.19L837.00 493.21L837.80 493.85L838.60 494.79L839.40 497.20L840.20 497.02L841.00 499.65L841.80 502.02L842.60 500.93L843.40 499.00L844.20 495.59L845.00 493.41L845.80 489.88L846.60 489.67L847.40 488.92L848.20 488.71L849.00 488.38L849.80 488.34L850.60 487.29L851.40 486.06L852.20 485.91L853.00 482.46L853.80 482.45L854.60 480.64L855.40 486.94L856.20 490.87L857.00 494.72L857.80 495.33L858.60 499.43L859.40 500.69L860.20 501.38L861.00 501.76L861.80 500.70L862.60 501.21L863.40 500.25L864.20 496.24L865.00 494.16L865.80 493.03L866.60 492.19L867.40 492.32L868.20 492.59L869.00 493.33L869.80 490.31L870.60 490.29L871.40 487.92L872.20 486.92L873.00 483.73L873.80 487.80L874.60 491.44L875.40 492.02L876.20 492.81L877.00 492.08L877.80 491.61L878.60 493.57L879.40 492.41L880.20 491.60L881.00 491.65L881.80 490.49L882.60 489.61L883.40 489.82L884.20 489.58L885.00 491.22L885.80 491.25L886.60 489.90L887.40 485.87L888.20 485.21L889.00 482.98L889.80 481.93L890.60 485.10L891.40 484.93L892.20 487.18L893.00 487.76L893.80 490.69L894.60 492.65L895.40 495.90L896.20 497.80L897.00 500.12L897.80 502.02L898.60 502.54L899.40 502.68L900.20 505.79L901.00 508.13L901.80 507.23L902.60 502.49L903.40 501.35L904.20 500.77L905.00 501.63L905.80 499.78L906.60 500.03L907.40 500.98L908.20 504.53L909.00 506.38L909.80 505.27L910.60 507.24L911.40 505.61L912.20 506.79L913.00 506.19L913.80 507.21L914.60 509.23L915.40 510.17L916.20 508.79L917.00 508.72L917.80 507.70L918.60 508.10L919.40 508.30L920.20 509.55L921.00 507.90L921.80 503.35L922.60 502.20L923.40 498.67L924.20 498.09L925.00 500.81L925.80 500.63L926.60 502.72L927.40 504.45L928.20 504.13L929.00 504.15L929.80 504.71L930.60 506.45L931.40 506.34L932.20 506.09L933.00 504.43L933.80 504.24L934.60 502.66L935.40 501.13L936.20 501.05L937.00 502.17L937.80 502.41L938.60 503.44L939.40 505.01L940.20 505.63L941.00 503.55L941.80 504.34L942.60 504.21L943.40 504.07L944.20 504.53L945.00 503.50L945.80 502.91L946.60 505.19L947.40 503.45L948.20 503.84L949.00 504.74L949.80 503.81L950.60 504.31L951.40 502.93L952.20 502.06L953.00 503.09L953.80 503.27L954.60 506.33L955.40 509.28L956.20 509.58L957.00 506.63L957.80 501.53L958.60 498.94L959.40 499.66L960.20 502.85L961.00 501.96L961.80 502.47L962.60 501.05L963.40 503.28L964.20 503.47L965.00 507.36L965.80 507.37L966.60 508.85L967.40 508.66L968.20 505.97" stroke="#ff0000" stroke-width="1.6" fill="none" stroke-linejoin="round" stroke-linecap="round"/>
<path d="M8.4 6V16H18.8" stroke="#8c8c8c" stroke-width="0.9" fill="none"/>
<path d="M10.6 10.5V15M11.6 9.5V14.5" stroke="#f01818" stroke-width="1.2"/>
<path d="M12.9 8V13.2" stroke="#2070e8" stroke-width="1.2"/>
<path d="M14.4 6.4V10.5" stroke="#f01818" stroke-width="1.3"/>
<path d="M15.9 7V13.2" stroke="#2070e8" stroke-width="1.2"/>
<path d="M17.4 8V13" stroke="#f01818" stroke-width="1.2"/>
<g stroke="#1c1c1c" stroke-width="0.28">
<text x="24.00" y="15.10" font-size="9.8" font-family="Liberation Sans, IPAGothic, sans-serif" fill="#1c1c1c" textLength="9.70" lengthAdjust="spacing">金</text>
<text x="34.30" y="15.60" font-size="10.8" font-family="Liberation Sans, IPAGothic, sans-serif" fill="#1c1c1c" textLength="3.60" lengthAdjust="spacingAndGlyphs">1</text>
<text x="37.60" y="15.10" font-size="9.8" font-family="Liberation Sans, IPAGothic, sans-serif" fill="#1c1c1c" textLength="18.60" lengthAdjust="spacing">分足</text>
<text x="57.80" y="15.60" font-size="10.8" font-family="Liberation Sans, IPAGothic, sans-serif" fill="#1c1c1c" textLength="37.60" lengthAdjust="spacingAndGlyphs">[2027/02]</text>
<text x="97.30" y="15.60" font-size="10.8" font-family="Liberation Sans, IPAGothic, sans-serif" fill="#1c1c1c" textLength="15.20" lengthAdjust="spacingAndGlyphs">1.00</text>
<text x="115.80" y="15.20" font-size="10.8" font-family="Liberation Sans, IPAGothic, sans-serif" fill="#1c1c1c" textLength="4.20" lengthAdjust="spacingAndGlyphs">-</text>
<text x="124.00" y="15.10" font-size="9.8" font-family="Liberation Sans, IPAGothic, sans-serif" fill="#1c1c1c" textLength="19.40" lengthAdjust="spacing">白金</text>
<text x="144.00" y="15.60" font-size="10.8" font-family="Liberation Sans, IPAGothic, sans-serif" fill="#1c1c1c" textLength="3.60" lengthAdjust="spacingAndGlyphs">1</text>
<text x="147.30" y="15.10" font-size="9.8" font-family="Liberation Sans, IPAGothic, sans-serif" fill="#1c1c1c" textLength="18.60" lengthAdjust="spacing">分足</text>
<text x="167.50" y="15.60" font-size="10.8" font-family="Liberation Sans, IPAGothic, sans-serif" fill="#1c1c1c" textLength="37.60" lengthAdjust="spacingAndGlyphs">[2027/02]</text>
<text x="207.00" y="15.60" font-size="10.8" font-family="Liberation Sans, IPAGothic, sans-serif" fill="#1c1c1c" textLength="15.20" lengthAdjust="spacingAndGlyphs">1.00</text>
</g>
<rect x="955.3" y="6.2" width="8.2" height="10.2" rx="1" fill="#e4e4e4" stroke="#8a8a8a" stroke-width="0.8"/>
<rect x="958.3" y="8.3" width="8.2" height="6.6" rx="1.2" fill="#d4d4d4" stroke="#7a7a7a" stroke-width="0.9"/>
<rect x="973.1" y="4.6" width="13.3" height="13.8" rx="2" fill="url(#gb)" stroke="#b2b2b2" stroke-width="0.8"/>
<rect x="989.2" y="4.6" width="13.3" height="13.8" rx="2" fill="url(#gb)" stroke="#b2b2b2" stroke-width="0.8"/>
<rect x="1005.2" y="4.6" width="13.3" height="13.8" rx="2" fill="url(#gb)" stroke="#b2b2b2" stroke-width="0.8"/>
<path d="M976.9 13.9H981.6" stroke="#484848" stroke-width="1.3"/>
<path d="M992.9 9.2H998.6V14.3H992.9Z" stroke="#505050" stroke-width="1" fill="none"/><path d="M992.4 8.7H999.1" stroke="#505050" stroke-width="1.2"/>
<path d="M1008.6 8.3L1014.8 14.5M1014.8 8.3L1008.6 14.5" stroke="#484848" stroke-width="1.1"/>
<text x="9.00" y="33.50" font-size="9.8" font-family="Liberation Sans, IPAGothic, sans-serif" fill="#2a2a30" textLength="9.60" lengthAdjust="spacing">金</text>
<text x="26.80" y="33.50" font-size="10.8" font-family="Liberation Sans, IPAGothic, sans-serif" fill="#2a2a30" textLength="33.00" lengthAdjust="spacingAndGlyphs">2027/02</text>
<rect x="65.0" y="22.6" width="26.0" height="12.9" fill="#ffffff"/>
<rect x="91.0" y="22.6" width="12.0" height="12.9" fill="#e6e6e6" stroke="#c4c4c8" stroke-width="0.6"/>
<rect x="92.6" y="24" width="8.8" height="10.2" rx="1" fill="#f2f2f2" stroke="#bdbdbd" stroke-width="0.6"/>
<path d="M94.9 28.0L97.0 25.4L99.1 28.0ZM94.9 30.4L97.0 33.0L99.1 30.4Z" fill="#222"/>
<path d="M93.0 29.2H101.0" stroke="#9a9a9a" stroke-width="0.5"/>
<text x="67.30" y="31.70" font-size="10.8" font-family="Liberation Sans, IPAGothic, sans-serif" fill="#202020" textLength="14.60" lengthAdjust="spacingAndGlyphs">1.00</text>
<path d="M107.2 22.6V35.4" stroke="#f2f3f7" stroke-width="1.1"/><path d="M106.3 22.6V35.4" stroke="#b9bdc9" stroke-width="0.7"/>
<text x="114.20" y="33.50" font-size="9.8" font-family="Liberation Sans, IPAGothic, sans-serif" fill="#2a2a30" textLength="18.60" lengthAdjust="spacing">白金</text>
<text x="140.80" y="33.50" font-size="10.8" font-family="Liberation Sans, IPAGothic, sans-serif" fill="#2a2a30" textLength="33.00" lengthAdjust="spacingAndGlyphs">2027/02</text>
<rect x="178.8" y="22.6" width="26.099999999999994" height="12.9" fill="#ffffff"/>
<rect x="204.9" y="22.6" width="11.699999999999989" height="12.9" fill="#e6e6e6" stroke="#c4c4c8" stroke-width="0.6"/>
<rect x="206.5" y="24" width="8.49999999999999" height="10.2" rx="1" fill="#f2f2f2" stroke="#bdbdbd" stroke-width="0.6"/>
<path d="M208.65 28.0L210.75 25.4L212.85 28.0ZM208.65 30.4L210.75 33.0L212.85 30.4Z" fill="#222"/>
<path d="M206.9 29.2H214.6" stroke="#9a9a9a" stroke-width="0.5"/>
<text x="181.20" y="31.70" font-size="10.8" font-family="Liberation Sans, IPAGothic, sans-serif" fill="#202020" textLength="14.60" lengthAdjust="spacingAndGlyphs">1.00</text>
<path d="M220.7 22.6V35.4" stroke="#f2f3f7" stroke-width="1.1"/><path d="M219.79999999999998 22.6V35.4" stroke="#b9bdc9" stroke-width="0.7"/>
<text x="227.20" y="33.50" font-size="9.8" font-family="Liberation Sans, IPAGothic, sans-serif" fill="#2a2a30" textLength="18.20" lengthAdjust="spacing">分足</text>
<path d="M249.89999999999998 28.099999999999998H254.5L252.2 30.799999999999997Z" fill="#111"/>
<rect x="258.8" y="22.6" width="24.19999999999999" height="12.9" fill="#ffffff"/>
<rect x="283.0" y="22.6" width="10.800000000000011" height="12.9" fill="#e6e6e6" stroke="#c4c4c8" stroke-width="0.6"/>
<rect x="284.6" y="24" width="7.600000000000011" height="10.2" rx="1" fill="#f2f2f2" stroke="#bdbdbd" stroke-width="0.6"/>
<path d="M286.29999999999995 28.0L288.4 25.4L290.5 28.0ZM286.29999999999995 30.4L288.4 33.0L290.5 30.4Z" fill="#222"/>
<path d="M285.0 29.2H291.8" stroke="#9a9a9a" stroke-width="0.5"/>
<text x="260.40" y="31.70" font-size="10.8" font-family="Liberation Sans, IPAGothic, sans-serif" fill="#202020" textLength="18.40" lengthAdjust="spacingAndGlyphs">1200</text>
<text x="300.20" y="33.50" font-size="10.8" font-family="Liberation Sans, IPAGothic, sans-serif" fill="#2a2a30" textLength="3.60" lengthAdjust="spacingAndGlyphs">1</text>
<text x="303.60" y="33.50" font-size="9.8" font-family="Liberation Sans, IPAGothic, sans-serif" fill="#2a2a30" textLength="18.60" lengthAdjust="spacing">分足</text>
<path d="M327.5 28.099999999999998H332.1L329.8 30.799999999999997Z" fill="#111"/>
<path d="M338.4 22.6V35.4" stroke="#f2f3f7" stroke-width="1.1"/><path d="M337.5 22.6V35.4" stroke="#b9bdc9" stroke-width="0.7"/>
<rect x="340.7" y="21.9" width="13" height="13.7" fill="#a9adb6"/>
<rect x="342.6" y="23.6" width="10.6" height="10.8" fill="#d9dce6"/>
<path d="M344.6 23.2V34.6M342.6 26.6H353.4" stroke="#6a5cc4" stroke-width="1.1" fill="none"/>
<path d="M347 29.2H351V30.4H349.2L352.2 33.2L351.3 34.1L348.2 31.2V33.2H347Z" fill="#8a1aa6"/>
<path d="M361.4 22.6V35.4" stroke="#f2f3f7" stroke-width="1.1"/><path d="M360.5 22.6V35.4" stroke="#b9bdc9" stroke-width="0.7"/>
<rect x="364" y="21.9" width="12.7" height="13.7" fill="#a6aab3"/>
<path d="M366.3 24.8L374.6 28.6L371.3 29.7L374.4 33L373 34.2L370 30.9L368.2 33.6Z" fill="#ece8fa" stroke="#7566c6" stroke-width="1.2" stroke-linejoin="round"/>
<path d="M384.6 34.2C383.8 32 382.4 30.8 382.6 29.6C383.2 28.8 384.4 29.4 385.2 30.4L385 25.4C385.2 24.4 386.4 24.4 386.6 25.4L386.9 24C387.3 23 388.5 23.1 388.7 24.1L389 24.6C389.5 23.8 390.6 24 390.8 25L391 26C391.6 25.5 392.6 25.8 392.7 26.8C393.1 29.5 392.8 32 391.6 34.2Z" fill="#fff8ec" stroke="#e59a3c" stroke-width="1.1" stroke-linejoin="round"/>
<path d="M401.4 34.2L402.6 30.8L409.6 23.8L411.6 25.6L404.6 32.8Z" fill="#f7c06a" stroke="#e89c34" stroke-width="0.9" stroke-linejoin="round"/><path d="M401.4 34.2L402 32.4L403.2 33.6Z" fill="#8a6a40"/>
<path d="M419.6 34.4L421 31L428 23.8L430.4 26L423.4 33.2Z" fill="#dfeaff" stroke="#3f7fe0" stroke-width="1.1" stroke-linejoin="round"/><path d="M427.9 29.2L430.2 31.6L427.9 34L425.6 31.6Z" fill="#1f3f9a"/>
<path d="M439.3 22.6V35.4" stroke="#f2f3f7" stroke-width="1.1"/><path d="M438.40000000000003 22.6V35.4" stroke="#b9bdc9" stroke-width="0.7"/>
<rect x="443.7" y="24.2" width="10.6" height="10.2" fill="#e4e7ee"/>
<path d="M443.9 24.2V34.3H454.3" stroke="#9a9a9a" stroke-width="0.7" fill="none"/>
<path d="M445.4 29.6V34M447.8 25.2V34M450.4 27.2V34M452.9 30.2V34" stroke="#1f84f2" stroke-width="1.3"/>
<path d="M456.3 28.099999999999998H460.90000000000003L458.6 30.799999999999997Z" fill="#111"/>
<rect x="465.6" y="24.2" width="11" height="10.2" fill="#e4e7ee"/>
<path d="M465.8 24.2V34.3H476.6" stroke="#9a9a9a" stroke-width="0.7" fill="none"/>
<path d="M467.6 29.6V34M470 25V34M472.6 27V34M475 30V34" stroke="#2a8af2" stroke-width="1.3"/>
<path d="M466.8 25L475.8 33.6M475.8 25L466.8 33.6" stroke="#e8283c" stroke-width="1.1"/>
<path d="M485.4 22.6V35.4" stroke="#f2f3f7" stroke-width="1.1"/><path d="M484.5 22.6V35.4" stroke="#b9bdc9" stroke-width="0.7"/>
<path d="M493.6 25.5A4.1 4.1 0 1 0 496.4 32.6" stroke="#2a90e0" stroke-width="1.7" fill="none"/>
<path d="M490.8 23.5H496.2L493.8 27.6Z" fill="#2a6ee0"/>
<text x="495.3" y="31.7" font-size="6.6" font-weight="bold" font-family="Liberation Sans, sans-serif" fill="#2a88e0" textLength="4.0" lengthAdjust="spacingAndGlyphs">R</text>
<path d="M1001.4 33.6L1007.2 28.2" stroke="#5a5af4" stroke-width="2.3" stroke-linecap="round"/>
<path d="M1010.8 24.2A3.1 3.1 0 1 0 1011.6 28.4L1009.2 27.6L1008.4 25.8Z" fill="#b9b9ff" stroke="#7f7ff8" stroke-width="0.9"/>
</svg>
</body></html>
